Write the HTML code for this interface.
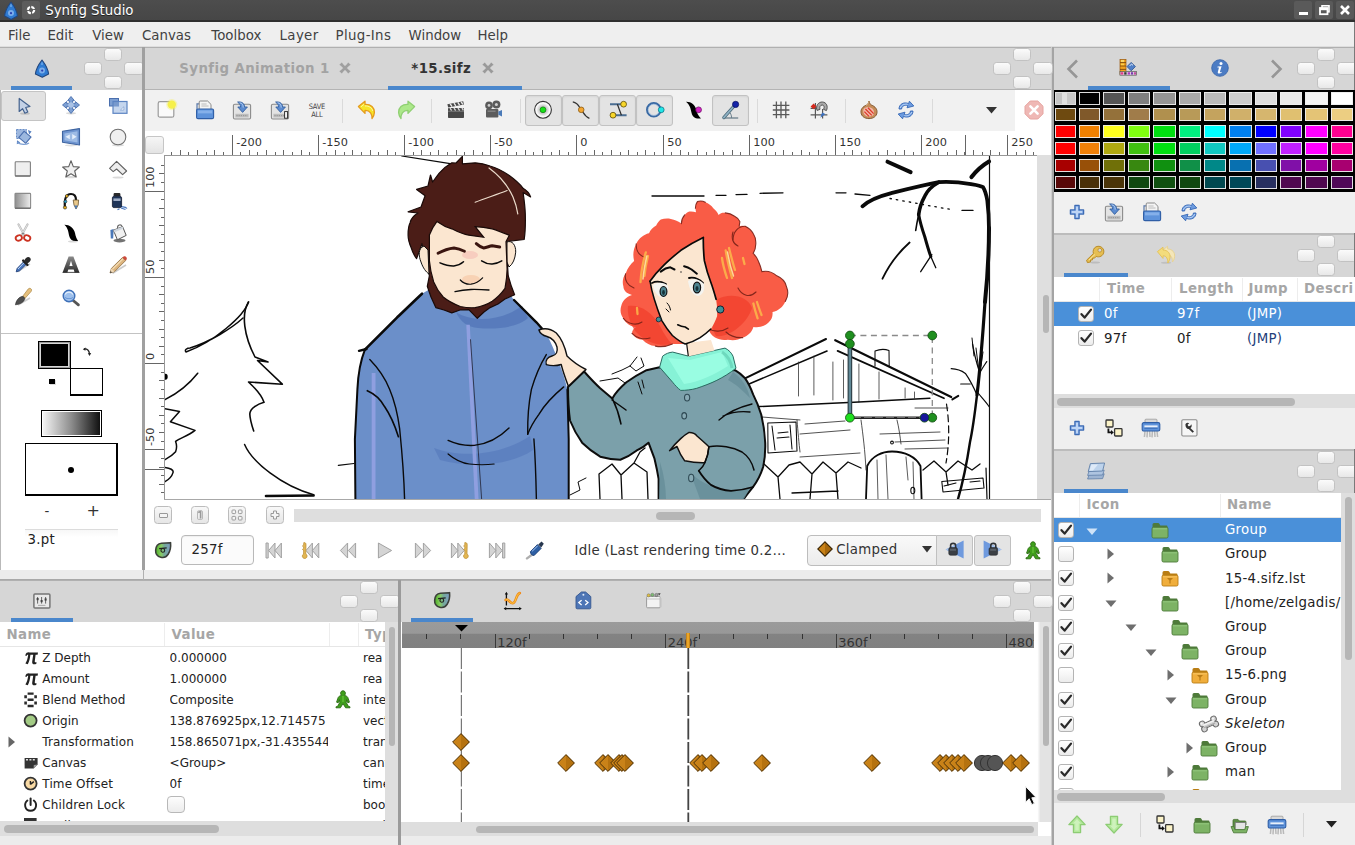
<!DOCTYPE html>
<html lang="en"><head><meta charset="utf-8"><title>Synfig Studio</title>
<style>
*{box-sizing:border-box;margin:0;padding:0}
html,body{width:1355px;height:845px;overflow:hidden;background:#d6d6d6}
body{font-family:"DejaVu Sans","Liberation Sans",sans-serif;font-size:14px;color:#2e3436}
#root{position:relative;width:1355px;height:845px;overflow:hidden;background:#d6d6d6}
.a{position:absolute}
.t{position:absolute;white-space:nowrap;line-height:1}
.hd{position:absolute;background:#d6d6d6}
.ul{position:absolute;height:3.6px;margin-top:-.6px;background:#4a87cc}
.dh{position:absolute;width:18px;height:12.4px;border-radius:3.5px;background:linear-gradient(#fbfbfb,#e8e8e8);border:1px solid #c2c2c2}
.sb{position:absolute;background:#dfdfdf}
.th{position:absolute;background:#b6b6b6;border-radius:4px}
.hb{font-weight:bold;color:#a6a6a6}
.cb{position:absolute;width:16px;height:16px;border:1px solid #b4b4b4;border-radius:3px;background:linear-gradient(#ffffff,#ececec)}
.row{position:absolute;left:0;right:0}
svg{position:absolute;overflow:visible}
</style></head>
<body><div id="root">
<div class="a" style="left:0px;top:0px;width:1355px;height:21px;background:linear-gradient(#4d4d4d,#464646)"></div><div class="a" style="left:0px;top:20px;width:1355px;height:2px;background:#2f2f2f"></div><div class="a" style="left:22px;top:1px;width:18px;height:18px;background:#5c5c5c;border-radius:2px"></div><svg style="left:26px;top:5px" width="10" height="10" viewBox="0 0 10 10"><circle cx="5" cy="5" r="3.2" fill="none" stroke="#fff" stroke-width="2.2" stroke-dasharray="3.6 1.4"/></svg><div class="t" style="left:45.2px;top:4.32px;font-size:13.33px;color:#fff;text-shadow:0 1px 0 #222">Synfig Studio</div><div class="a" style="left:1294px;top:1px;width:18px;height:18px;background:#5a5a5a;border-radius:2px"></div><div class="a" style="left:1315px;top:1px;width:18px;height:18px;background:#5a5a5a;border-radius:2px"></div><div class="a" style="left:1336px;top:1px;width:18px;height:18px;background:#5a5a5a;border-radius:2px"></div><div class="a" style="left:1299px;top:12px;width:9px;height:3px;background:#fff"></div><svg style="left:1319px;top:5px" width="11" height="10" viewBox="0 0 11 10"><rect x="3" y="0.8" width="7" height="6" fill="none" stroke="#fff" stroke-width="1.6"/><rect x="1" y="3" width="7.5" height="6.2" fill="#5a5a5a" stroke="#fff" stroke-width="1.8"/><rect x="1" y="3" width="7.5" height="2.2" fill="#fff"/></svg><svg style="left:1340px;top:5px" width="10" height="10" viewBox="0 0 10 10"><path d="M1 1 L9 9 M9 1 L1 9" stroke="#fff" stroke-width="2.6" stroke-linecap="butt"/></svg>
<div class="a" style="left:0px;top:22px;width:1355px;height:25px;background:#efefef"></div><div class="a" style="left:0px;top:46px;width:1355px;height:1px;background:#dedede"></div><div class="t" style="left:8.1px;top:28.62px;font-size:13.33px;letter-spacing:0;color:#414141">File</div><div class="t" style="left:47.4px;top:28.62px;font-size:13.33px;letter-spacing:0;color:#414141">Edit</div><div class="t" style="left:92.3px;top:28.62px;font-size:13.33px;letter-spacing:0;color:#414141">View</div><div class="t" style="left:142.0px;top:28.62px;font-size:13.33px;letter-spacing:0;color:#414141">Canvas</div><div class="t" style="left:211.3px;top:28.62px;font-size:13.33px;letter-spacing:0;color:#414141">Toolbox</div><div class="t" style="left:279.6px;top:28.62px;font-size:13.33px;letter-spacing:.35px;color:#414141">Layer</div><div class="t" style="left:335.6px;top:28.62px;font-size:13.33px;letter-spacing:.35px;color:#414141">Plug-Ins</div><div class="t" style="left:408.6px;top:28.62px;font-size:13.33px;letter-spacing:0;color:#414141">Window</div><div class="t" style="left:477.5px;top:28.62px;font-size:13.33px;letter-spacing:0;color:#414141">Help</div>
<div class="a" style="left:0px;top:47px;width:143px;height:43px;background:#d6d6d6;border-top:1.3px solid #b0b0b0"></div><div class="a" style="left:0px;top:90px;width:143px;height:480px;background:#fff;border-left:1px solid #b9b9b9"></div><div class="ul" style="left:11px;top:87px;width:61px"></div><div class="dh" style="left:104px;top:48.3px"></div><div class="dh" style="left:84.4px;top:61.8px;height:13.4px"></div><div class="dh" style="left:123.6px;top:61.8px;width:20px;height:13.4px"></div><div class="dh" style="left:104px;top:76.4px"></div><div class="a" style="left:1px;top:91px;width:45px;height:30px;background:#e2e2e2;border:1px solid #c4c4c4;border-radius:3px"></div><div class="a" style="left:1px;top:333px;width:142px;height:1px;background:#c3c3c3"></div><div class="a" style="left:70px;top:368px;width:33px;height:28px;background:#fff;border:1px solid #000;border-bottom-width:2px"></div><div class="a" style="left:38px;top:341px;width:33px;height:28px;background:#000;border:1px solid #000;box-shadow:inset 0 0 0 1px #9a9a9a,inset 0 0 0 2px #d8d8d8"></div><div class="a" style="left:49px;top:379px;width:6px;height:5px;background:#000;box-shadow:1px 1px 0 #ddd"></div><svg style="left:82px;top:347px" width="10" height="10" viewBox="0 0 10 10"><path d="M2 2 Q7 1.5 7.5 7" fill="none" stroke="#222" stroke-width="1.3"/><path d="M0.8 2.2 L3.6 0.6 L3.4 3.8Z M5.8 6.2 L9.2 6 L7.6 9Z" fill="#222"/></svg><div class="a" style="left:41px;top:410px;width:61px;height:27px;border:1px solid #000;background:#fff;padding:1px"><div style="width:100%;height:100%;background:linear-gradient(90deg,#f4f4f4,#8c8c8c 50%,#111)"></div></div><div class="a" style="left:25px;top:443px;width:93px;height:53px;background:#fff;border:1px solid #000;border-right-width:2px;border-bottom-width:2px"></div><div class="a" style="left:68px;top:466.5px;width:6.4px;height:6.4px;background:#000;border-radius:50%"></div><div class="t" style="left:44.5px;top:504.72px;font-size:13.33px;letter-spacing:0.27px;color:#333">-</div><div class="t" style="left:86.5px;top:502.96px;font-size:16px;color:#333">+</div><div class="a" style="left:25px;top:529px;width:93px;height:1px;background:#dcdcdc"></div><div class="a" style="left:25px;top:530px;width:93px;height:18px;background:linear-gradient(#f7f7f7,#fff 40%)"></div><div class="t" style="left:27.5px;top:533.32px;font-size:13.33px;letter-spacing:0.27px;color:#222">3.pt</div><div class="a" style="left:142.3px;top:47px;width:2.6px;height:522.5px;background:#a0a0a0"></div><div class="a" style="left:1051px;top:47px;width:3.4px;height:798px;background:#a4a4a4"></div><div class="a" style="left:1051px;top:47px;width:1px;height:798px;background:#cdcdcd"></div><div class="a" style="left:145px;top:47px;width:906px;height:43px;background:#d6d6d6;border-top:1.3px solid #b0b0b0"></div><div class="a" style="left:145px;top:89px;width:906px;height:1px;background:#b4b4b4"></div><div class="dh" style="left:1013px;top:48.3px"></div><div class="dh" style="left:993.4px;top:61.8px;height:13.4px"></div><div class="dh" style="left:1032.6px;top:61.8px;width:20px;height:13.4px"></div><div class="dh" style="left:1013px;top:76.4px"></div><div class="t" style="left:179.3px;top:62.22px;font-size:13.33px;letter-spacing:0.4px;font-weight:bold;color:#a3a3a3">Synfig Animation 1</div><div class="t" style="left:411.3px;top:62.22px;font-size:13.33px;letter-spacing:0.4px;font-weight:bold;color:#333">*15.sifz</div><svg style="left:339px;top:62px" width="12" height="12" viewBox="0 0 12 12"><path d="M2 2 L10 10 M10 2 L2 10" stroke="#a0a0a0" stroke-width="2.6"/><path d="M0.8 3.2 L3.2 0.8 M8.8 0.8 L11.2 3.2 M0.8 8.8 L3.2 11.2 M8.8 11.2 L11.2 8.8" stroke="#a0a0a0" stroke-width="1.2"/></svg><svg style="left:482px;top:62px" width="12" height="12" viewBox="0 0 12 12"><path d="M2 2 L10 10 M10 2 L2 10" stroke="#9a9a9a" stroke-width="2.6"/><path d="M0.8 3.2 L3.2 0.8 M8.8 0.8 L11.2 3.2 M0.8 8.8 L3.2 11.2 M8.8 11.2 L11.2 8.8" stroke="#9a9a9a" stroke-width="1.2"/></svg><div class="ul" style="left:388px;top:87px;width:134px"></div><div class="a" style="left:145px;top:90px;width:870px;height:41px;background:#f1f1f1"></div><div class="a" style="left:1015px;top:90px;width:36px;height:41px;background:#fff"></div><div class="a" style="left:342px;top:99px;width:1px;height:24px;background:#dadada"></div><div class="a" style="left:430.5px;top:99px;width:1px;height:24px;background:#dadada"></div><div class="a" style="left:519.5px;top:99px;width:1px;height:24px;background:#dadada"></div><div class="a" style="left:756.5px;top:99px;width:1px;height:24px;background:#dadada"></div><div class="a" style="left:844.5px;top:99px;width:1px;height:24px;background:#dadada"></div><div class="a" style="left:932px;top:99px;width:1px;height:24px;background:#dadada"></div><div class="a" style="left:525px;top:95px;width:37px;height:31px;background:#e3e3e3;border:1px solid #c2c2c2;border-radius:3px;box-shadow:inset 0 1px 2px rgba(0,0,0,.06)"></div><div class="a" style="left:562px;top:95px;width:37px;height:31px;background:#e3e3e3;border:1px solid #c2c2c2;border-radius:3px;box-shadow:inset 0 1px 2px rgba(0,0,0,.06)"></div><div class="a" style="left:599px;top:95px;width:37px;height:31px;background:#e3e3e3;border:1px solid #c2c2c2;border-radius:3px;box-shadow:inset 0 1px 2px rgba(0,0,0,.06)"></div><div class="a" style="left:636px;top:95px;width:37px;height:31px;background:#e3e3e3;border:1px solid #c2c2c2;border-radius:3px;box-shadow:inset 0 1px 2px rgba(0,0,0,.06)"></div><div class="a" style="left:712px;top:95px;width:37px;height:31px;background:#e3e3e3;border:1px solid #c2c2c2;border-radius:3px;box-shadow:inset 0 1px 2px rgba(0,0,0,.06)"></div><svg style="left:986px;top:107px" width="11" height="7" viewBox="0 0 11 7"><path d="M0 0 L11 0 L5.5 6.5Z" fill="#333"/></svg><div class="a" style="left:145px;top:499px;width:906px;height:71px;background:#fff"></div><div class="a" style="left:0px;top:570px;width:1051px;height:9px;background:#ececec"></div><div class="a" style="left:0px;top:579px;width:1051px;height:1.6px;background:#a9a9a9"></div><div class="a" style="left:143.2px;top:569.5px;width:1px;height:10px;background:#b0b0b0"></div><div class="a" style="left:0px;top:580px;width:398px;height:42px;background:#d6d6d6;border-top:1.3px solid #b0b0b0"></div><div class="ul" style="left:11px;top:619px;width:62px"></div><div class="dh" style="left:360px;top:581.3px"></div><div class="dh" style="left:340.4px;top:594.8px;height:13.4px"></div><div class="dh" style="left:379.6px;top:594.8px;width:20px;height:13.4px"></div><div class="dh" style="left:360px;top:609.4px"></div><div class="a" style="left:398px;top:580px;width:3px;height:265px;background:#9a9a9a"></div><div class="a" style="left:401px;top:580px;width:650px;height:42px;background:#d6d6d6;border-top:1.3px solid #b0b0b0"></div><div class="ul" style="left:411px;top:619px;width:62px"></div><div class="dh" style="left:1013px;top:581.3px"></div><div class="dh" style="left:993.4px;top:594.8px;height:13.4px"></div><div class="dh" style="left:1032.6px;top:594.8px;width:20px;height:13.4px"></div><div class="dh" style="left:1013px;top:609.4px"></div><div class="a" style="left:1054px;top:47px;width:301px;height:43px;background:#d6d6d6;border-top:1.3px solid #b0b0b0"></div><div class="ul" style="left:1088px;top:87px;width:82px"></div><div class="dh" style="left:1317px;top:48.3px"></div><div class="dh" style="left:1297.4px;top:61.8px;height:13.4px"></div><div class="dh" style="left:1336.6px;top:61.8px;width:20px;height:13.4px"></div><div class="dh" style="left:1317px;top:76.4px"></div><div class="a" style="left:1054px;top:233px;width:301px;height:44px;background:#d6d6d6;border-top:1.3px solid #b0b0b0"></div><div class="a" style="left:1054px;top:233px;width:301px;height:2px;background:#bcbcbc"></div><div class="ul" style="left:1064px;top:274px;width:64px"></div><div class="dh" style="left:1317px;top:235.3px"></div><div class="dh" style="left:1297.4px;top:248.8px;height:13.4px"></div><div class="dh" style="left:1336.6px;top:248.8px;width:20px;height:13.4px"></div><div class="dh" style="left:1317px;top:263.4px"></div><div class="a" style="left:1054px;top:449px;width:301px;height:44px;background:#d6d6d6;border-top:1.3px solid #b0b0b0"></div><div class="a" style="left:1054px;top:449px;width:301px;height:2px;background:#bcbcbc"></div><div class="ul" style="left:1064px;top:490px;width:64px"></div><div class="dh" style="left:1317px;top:451.3px"></div><div class="dh" style="left:1297.4px;top:464.8px;height:13.4px"></div><div class="dh" style="left:1336.6px;top:464.8px;width:20px;height:13.4px"></div><div class="dh" style="left:1317px;top:479.4px"></div><div class="a" style="left:1354px;top:22px;width:1px;height:823px;background:#7a7a7a"></div><svg style="left:1066px;top:59px" width="13" height="20" viewBox="0 0 13 20"><path d="M11 1.5 L2.5 10 L11 18.5" fill="none" stroke="#969696" stroke-width="2.6"/></svg><svg style="left:1270px;top:59px" width="13" height="20" viewBox="0 0 13 20"><path d="M2 1.5 L10.5 10 L2 18.5" fill="none" stroke="#969696" stroke-width="2.6"/></svg>
<div class="a" style="left:165px;top:156px;width:872px;height:343px;background:#fff;overflow:hidden"><svg style="left:-165px;top:-156px" width="1355" height="845" viewBox="0 0 1355 845"><g fill="none" stroke="#0a0a0a" stroke-linecap="round" stroke-linejoin="round" stroke-width="1.5"><path d="M248.5 302 C244 316 214 342 186 352 C184 350 187 348 190 348 C210 342 232 328 243 318"/><path d="M248.5 302 C241 314 244 336 255 357 L268 362 L257.5 360.5 L282.3 384.2 L248.5 382 C255 388 262 396 264 402.3 C258 404 250 408 249.8 414 C250 420 252 426 253.7 431" stroke-width="1.6"/><path d="M244.6 444.5 C252 462 282 486 313.6 494.7"/><path d="M266 496 L313.6 495.5" stroke-width="2.6"/><path d="M197.7 373.2 C190 383 178 393 165 399.7"/><path d="M165 408.8 L179.5 411.4 L170.4 421.8 L195 430.4 C188 436 180 438 175.6 441.4 C177 445 177 448 175.6 451.8 C172 456 168 458 165 459.6"/><path d="M165 467.4 C170 468 174 470 173 472.6 C172 476 168 480 165 481.7"/><path d="M338.3 465.3 L353.9 463.5" stroke-width="1.2"/><path d="M401.7 156 L451.8 163.8" stroke-width="1.2"/></g><ellipse cx="165.5" cy="376.8" rx="2.2" ry="3" fill="#000"/><g fill="none" stroke="#0a0a0a" stroke-linecap="round" stroke-linejoin="round" stroke-width="1.3"><path d="M652 196 L704 196"/><path d="M716 195.3 L726 195.3"/><path d="M736 194.6 L747 194.4"/><path d="M760 193.3 L783 192.8"/><path d="M836 192.8 L846 192.8 M855 194 L870 195.3"/><path d="M890 198.5 C910 202 935 207 952 209.5" stroke-dasharray="1.5 5"/><path d="M962 210.4 L973 210.4"/></g><g fill="none" stroke="#0a0a0a" stroke-linecap="round" stroke-linejoin="round"><path d="M887.5 161.7 L910.6 172.1" stroke-width="4"/><path d="M971.5 177 C977 170 983 165 989 161.5" stroke-width="4.2"/><path d="M862.4 206.3 C870 199 880 196 890.5 193.3 C906 189.5 922 185.5 938.8 182.2 C950 181.5 961 182.5 971 184.2 C976 185 980 185.5 983.1 187.2 C985.5 191 986.5 196 987.3 200.3 C988.5 210 989 220 989 230" stroke-width="3.8"/><path d="M938.8 182.2 C932 186 927 191 924.7 196.3 C921 203 919.5 208 918.7 214.4" stroke-width="3.6"/><path d="M918.7 214.4 C917.5 220 916.5 225 915.7 230.5" stroke-width="1.6"/><path d="M918.7 214.4 C920 222 922.5 230 924.7 236.5 C926.5 243 928.5 250 930.8 256.6" stroke-width="3"/><path d="M930.8 256.6 L935.8 267.7 M931.8 254.6 L920.7 271.7" stroke-width="1.3"/><path d="M909.6 242.5 C899 252 889 265 882.5 278.7" stroke-width="1.8"/><path d="M989 228 C989 250 987.5 278 985 302" stroke-width="4"/><path d="M985 302 C983 332 980.5 365 977 395" stroke-width="3.2"/><path d="M977 395 C975 412 973 428 970 442 C967 462 963 482 958 499" stroke-width="2.4"/><path d="M972.5 343.8 C974 352 976 361 978.5 368.7 M951.2 368.7 C957 369 962 371 965.4 373.4 C970 380 974 388 977 395 M960.7 384 L970.2 384 M986.7 361.6 C984.5 365 982.5 368 980.8 371 M978.5 393.5 C982 398 986 402 989 406.5" stroke-width="1.2"/><path d="M972 338 L974 356 M976 348 L979 372 M983 352 L981 366" stroke-width="1"/></g><g fill="none" stroke="#0a0a0a" stroke-linecap="round" stroke-linejoin="round" stroke="#1c1c1c" stroke-width="1.05"><path d="M745 378.3 L826 339" stroke-width="2"/><path d="M749 384 L827 351" stroke-width="1.6"/><path d="M835.2 340.2 L951.2 397" stroke-width="2.2"/><path d="M837.6 350.9 L944 398.2" stroke-width="1.8"/><path d="M952.4 399.4 L958.3 395.9" stroke-width="2"/><path d="M875 366 L875 351 C880 349 885 349 889 350.5 L889.2 366"/><path d="M798.5 362 V396 M813.9 356 V395 M832.9 362 V400 M843.5 360 V398 M858.9 364 V402 M879 372 V399 M905.1 388 V398 M914.5 392 V398" stroke-width=".8" stroke="#333"/><path d="M759.5 406.5 C800 405 880 401 929.9 398.2" stroke-width="1.5"/><path d="M762 417 L800 420 M805 424 L845 421 M800 434 L850 430 M880 434 L940 432 M895 442 L945 440 M905 449 L948 448 M800 457 L860 453 M915 408 L948 408" stroke-width=".85" stroke="#333"/><path d="M946.5 404 C949 420 950 440 946 463" stroke-dasharray="7 4" stroke-width="1.2"/><path d="M797 420 C798 432 799 444 800 452 M861 420 C863 435 865 450 866 470 M897 420 C899 428 900 436 901 444" stroke-width=".85" stroke="#333"/><path d="M767.8 423 L796 422 L797 451 L768 453 Z M772 426 L775 450 M790 425 L792 449 M778 433 L788 432 M777 438 L789 437"/><circle cx="892" cy="442.5" r="1.4"/><path d="M866 499 L867.2 466 C872 456 882 451.5 892 451.5 C905 451.5 916 457 920.5 466 L921.6 499" stroke-width="1.8"/><path d="M877 460 L878 499 M886 455 L888 499 M906 457 L908 480 M913 462 L914 499" stroke-width=".8" stroke="#333"/><ellipse cx="912.8" cy="490.5" rx="2" ry="3.2"/><path d="M764 464 L778 477 L789 465 L800 462 L812 474 L823 462 L836 473 L848 462 L861 468 M778 477 L780 499 M812 474 L810 499 M836 473 L838 499 M792 493 L838 491" stroke-width="1.3"/><path d="M923 470 L934 461 L946 472 L958 461 L972 470 L980 464 M946 472 L948 485" stroke-width="1.3"/><path d="M941.8 481.5 L983 478 L984 488 L943 492 Z M944 486 L956 483 M970 482 L980 481" stroke-width="1.1"/><path d="M986 468 L987 499" stroke-width="1.2"/><path d="M600 499 L599 474 L612 464 L621 475 L634 463 L647 472 L648 499 M621 475 L622 499 M634 463 L640 452 L645 448" stroke-width="1.3"/><path d="M612 374 L622 370 L630 366 L637 357 M630 366 L636 371 L644 366 L641 358 M600 381 L618 378 L625 383" stroke-width="1"/><path d="M570 495 L580 490 L578 482 L586 478" stroke-width="1"/></g><path d="M422 293.7 C412 303 404 311 397.2 317.3 L364.9 349.7 C360 362 358 376 357.4 389.4 L354.9 439.1 L355.4 500 L568.7 500 L568.7 439 L567.4 389.4 C565 379 562 370 558.7 362 C555 352 551 342 546.3 333.5 L536.4 322.3 L514 300 L505 288 L435 286 Z" fill="#6b8fc9"/><path d="M456 312 C470 322 500 322 522 306 L528 318 C520 326 500 330 478 328 C468 327 460 322 456 312Z" fill="#5578ba" opacity=".85"/><path d="M434 448 C460 458 500 456 530 436 L533 450 C510 466 470 468 440 460Z" fill="#5a7dbe" opacity=".8"/><path d="M466.3 324.8 L469.8 324.8 L478.6 500 L474.8 500Z" fill="#8f9fe0"/><path d="M371.7 373 L375.5 373 L375.5 500 L371.7 500Z" fill="#8f9fe0"/><g fill="none" stroke="#0a0a0a" stroke-linecap="round" stroke-linejoin="round" stroke-width="1.4"><path d="M422 293.7 C412 303 404 311 397.2 317.3 L364.9 349.7" stroke-width="2.6"/><path d="M364.9 349.7 C360 362 358 376 357.4 389.4 L354.9 439.1 L355.4 500" stroke-width="2"/><path d="M359 350.8 L366.5 349" stroke-width="2.4"/><path d="M514 300 L536.4 322.3 L546.3 333.5" stroke-width="2.4"/><path d="M567.4 389.4 L568.7 439 L568.7 500" stroke-width="2"/><path d="M470.5 339.7 L481.7 500" stroke-width=".8" stroke="#223"/><path d="M367.3 390.7 C375 394 381 400 384.7 406.8 C391 416 395 426 398.4 436.7" stroke-width="1.6"/><path d="M369.8 359.6 C378 368 385 378 389.7 389.4 C395 402 398 416 399.7 429.2 C402 452 404 476 404.6 500"/><path d="M546.3 354.6 C540 365 535 377 531.4 389.4 C528.5 404 527.5 420 527.7 434.2"/><path d="M563.7 386.9 C554 395 545 404 538.9 414.3 C534 421 530 428 527.7 434.2 M533.9 439 C535.5 460 536 480 536.4 500"/><path d="M448.1 440.4 C456 444 465 446 474.2 445.4 C487 444 499 438 509 428"/><path d="M448.1 454 C454 459 461 463 469.3 464 C478 465 486 465 494.1 464" stroke-width="1.2"/></g><path d="M462.4 156.4 L456 163 L451.8 162.8 C446 166 442 170 439 173.4 L432.6 182 L430.5 175 L428 186 L416.6 189.4 L425.1 195.8 L421 207 L408.1 211.8 L418 213 C413 216 411 219 410.2 222.4 C408 227 408 231 408.1 235.2 C408 240 409.5 244 411.3 248 C412.5 252 414.5 256 416.6 258.6 L422 243.7 L425.5 262 L429.4 275.7 L427.3 286.3 L431 297 L435.8 307.6 L444 310 L451.8 312.9 L460 310 L468.8 309.7 L477.3 318.3 L484 312 L490.1 307.6 L498 304 L505 299 L514.6 294.8 L511.4 286.3 L508.2 275.7 L506 241.6 L524.2 239.5 C525.5 231 525.5 222 525.3 213.9 C525 206 524 199 523.1 192.6 L530.6 196.9 C529 192 526 190 523.1 188.3 C519 183 514 179 509.3 175.6 C503 171 497 168 490.1 166 C485 164 480 163 475.2 162.8 L462.4 163.8 Z" fill="#4b1d17" stroke="#1a0a08" stroke-width="1.2" stroke-linejoin="round"/><path d="M424 246 C418 248 418.5 256 421 262 C423 268 426 272 429 274 L428 250Z" fill="#fbe6d0" stroke="#111" stroke-width="1"/><path d="M507 242 C512 240 516 245 515.7 252.2 C515 259 513 264 509 267 L507 262Z" fill="#fbe6d0" stroke="#111" stroke-width="1"/><path d="M429.4 235 C432 228 435 224 437 221.4 C442 225 447 227.5 451.8 228.8 C458 232 464 234.5 468.8 235.2 L483.7 237.3 L475.2 226.7 C481 227 487 227.8 492.2 228.8 C498 230.5 504 233 509.3 235.2 L506 241.6 L507.1 269.3 C507 276 506 283 505 288.4 C501 294 497 298 492.2 301.2 C487 304.5 481 306.5 475.2 307.6 C470 308 465 307.5 460.3 306.5 C454 304 448 301 443.2 297 C439 292.5 436 287.5 433.7 282 C431.5 275 430 268 429.4 260.8 Z" fill="#fbe6d0" stroke="#1a0a08" stroke-width="1.2"/><ellipse cx="471" cy="279.5" rx="9" ry="4.5" fill="#f6c9a8" opacity=".7"/><ellipse cx="470" cy="255" rx="8" ry="4" fill="#f4b8b0" opacity=".55"/><g fill="none" stroke="#0a0a0a" stroke-linecap="round" stroke-linejoin="round" stroke-width="1.5"><path d="M440 262.9 C445 265 449 266.2 453.9 266 C458 265.5 461 264 463.5 261.8"/><path d="M481.6 260.8 C485 263 488.5 264.2 492.2 264 C496 263.6 499 262.5 501.8 260.8"/><path d="M438 253.3 C444 250 449 248.5 454 248 C458 248.5 461.5 249.8 464.5 251.2" stroke="#3a1510" stroke-width="2.8"/><path d="M476.3 243.7 C479 246 481 247.5 483.7 248 C487 247.5 489.5 246.2 492.2 245.8 L499.7 247" stroke="#3a1510" stroke-width="3"/><path d="M460.3 280 C463 283 467 284.5 471 284.2 C476 283.5 479.5 281 482.6 277.8" stroke-width="1.2"/><path d="M455 291.6 C460 290.5 465 289.8 471 289.5 C477 289.4 483 289.6 489 290" stroke-width="1.3"/></g><path d="M475.2 202.2 C486 198 497 194.5 507.1 190.5 M489 168 C500 176 508 186 513 197 C515.5 203 517 208.5 517.8 213.9" fill="none" stroke="#ecdccc" stroke-width="1.2" stroke-linecap="round"/><path d="M538.9 330 C545 327.5 551 329 556.3 333 C562 339 565 347 567 356 C572 361 579 366 586 369.5 L569 388 C566 380 563 372 561.2 364.5 C556 366 551 366 546.3 364.6 C545 360 548 357 552 356 C556 355 558 352 557 347 C555.5 342 552 338 547 336.5 C543 335.5 540 333.5 538.9 330Z" fill="#fbe6d0" stroke="#111" stroke-width="1.4" stroke-linejoin="round"/><path d="M568 387 L584.1 371.5 C589 377 594.5 383 600.2 388.3 L612.3 398.4 C616 392 621 387 626.4 382.3 C633 377.5 640 373.5 646.5 370.2 L659.6 367.2 L735 370.2 C739 372.5 742 375 745.1 378.3 C748.5 383 751 388.5 753.1 394.4 C756.5 401 759 407.5 761.2 414.5 C763.5 424 764.8 433 765.2 442.7 C765.5 451 764.8 459 763.2 466.8 C761 474 757.5 481 753.1 486.9 C750 491 746.5 495 743.1 500 L658.6 500 L658.6 478.9 C657.5 472 656 465 654.5 458.7 L648.5 442.7 C645 446 641 448.5 636.4 450.7 C631.5 454.5 626 457.5 620.3 459.8 C613.5 459.5 606.5 458.5 600.2 456.7 C593.5 452.5 587.5 448 582.1 442.7 C577 435.5 573 428 570 420.5 C568.5 409 568 398 568 387Z" fill="#7ba0aa" stroke="#0d0d0d" stroke-width="2" stroke-linejoin="round"/><path d="M660 462 C664 474 666 488 666 500 L659 500Z M690 472 C705 488 730 494 750 488 L744 499 L700 499Z M733 372 C742 378 748 388 750 398 C744 392 736 384 728 380Z" fill="#668d99" opacity=".8"/><path d="M659.6 367.2 L662.6 356.2 C666 353.5 669 352.5 672.7 352.1 L688.7 356.2 L725 348.1 C729 350 731.5 353 733 356.2 L736 368.2 C730 373 723.5 377 716.9 380.3 C710.5 383.5 703.5 386 696.8 388.3 C691.5 389.8 686 390.4 680.7 390.4 C677.5 388 675 385.2 672.7 382.3 Z" fill="#86f2d6" stroke="#2a6a60" stroke-width="1"/><path d="M668 358 L690 360 L722 352 L728 366 C715 374 700 382 684 384 Z" fill="#9cffe4" opacity=".85"/><path d="M722 352 C728 356 731 362 732 368" fill="none" stroke="#5fc8ae" stroke-width="3" opacity=".6"/><path d="M686 343 L688 356.5 L714.5 350.5 L711 340 Z" fill="#fbe6d0"/><path d="M686.7 344 L688.3 356" fill="none" stroke="#111" stroke-width="1.2"/><path d="M669.6 450.7 C673 446 677 442 680.7 438.6 C683.5 436 686 434 688.7 432.6 C692 432.4 695 433.5 697 436 C701 439.5 705 443 708.9 446.7 C708.5 452 707 458 704.8 462.8 C698 463 691 462.2 684.7 460.8 L680.7 454.7 L677 446.5 Z" fill="#fbe6d0" stroke="#111" stroke-width="1.5" stroke-linejoin="round"/><g fill="none" stroke="#0a0a0a" stroke-linecap="round" stroke-linejoin="round" stroke-width="1.5"><path d="M698.8 470.8 C702 476 706 481 710.9 484.9 C717 488.5 724 490.5 731 490.9 C739 490.5 746.5 489 753 487" stroke-width="1.8"/><path d="M698.8 470.8 C702 468 704 465 704.8 462.8 C707 458 708.5 452 708.9 446.7 C720 445 733 447 742 452 C748 456 752 462 754 470"/><path d="M719 420 C728 412 740 407 752 404 M723 416 C732 412 742 411 750 412" stroke-width="1.3"/><path d="M612.3 398.4 C616 406 619 414 621 424 M612 400 L626 410" stroke-width="1.5"/><ellipse cx="687.1" cy="397.6" rx="2.6" ry="3.4" stroke-width="1.1" stroke="#2f4a54" fill="#88aab4"/><ellipse cx="684.2" cy="415.8" rx="2.4" ry="3.2" stroke-width="1.1" stroke="#2f4a54" fill="#88aab4"/><ellipse cx="691.2" cy="478" rx="2.6" ry="3.8" stroke-width="1.1" stroke="#2f4a54" fill="#88aab4"/><path d="M638 382 L642 394 M642 380 L644 388" stroke-width="1"/></g><path d="M697.4 201.6 C700 200.5 703 201 705.3 202.3 C708.5 203.5 711.5 205.5 713.3 208.3 C715.5 210 717.5 212.5 718.6 214.9 C720.5 213 723 212.5 725.3 212.9 C729 213 732 214.3 734.6 216.3 C737 217.5 739 219.5 739.9 221.6 L739.2 226.2 C741 225.5 743.2 225.5 745.2 226.2 C748.5 227.8 751.5 230.3 753.2 233.5 C755 236.3 755.9 239.5 755.8 242.8 C756 246.5 755 250.3 753.2 253.4 C755.5 255.6 757.4 258.3 758.5 261.4 C759.8 264 760.7 266.7 761.9 271.6 C767 270.5 772.5 272 776.8 275.8 C782 278 785.5 282 786.4 286.5 C788.5 291.5 788 297 785.3 301.4 C783 307 778.5 310.5 772.5 312.1 C773 316.5 771.5 320 768.3 322.7 C764 326.5 759 328 753.4 327 C752 332 748 336 742.7 337.6 C738.5 340 733.5 340.8 727.8 339.7 C723.5 340.5 719 339.8 715 337.6 C711.5 335.5 709.5 332.5 708.6 329.1 L700 337.6 L685.2 344 L672.4 344 C667 346.8 661 347.5 655.4 346.1 C650 345.5 646 343.2 642.6 339.7 C638 339.5 634.5 337 632 333.4 C632 331 633.5 328.5 636.2 327 C630.5 326.5 626 323.5 623.4 318.4 C620.5 314.5 619.8 310 621.3 305.7 C622.5 301 626 297 632 295 C626.5 293.5 623.5 290.5 623.4 286.5 C622 281.5 623 277 625.6 273.7 C627.5 268 630.5 264 634.1 260.9 C632.5 254.5 633.5 248.5 636.2 243.9 C639 238 643.5 234.5 649 233.2 C650.5 230 653 227.3 656.2 225.6 C657.3 223.2 658.8 221.2 660.8 219.6 C664 218.5 667.5 218.3 670.8 218.9 C674.8 219.5 678.5 221.2 681.4 223.6 C681.5 220 682.8 217 684.7 214.9 C686 213.2 687.6 212.1 689.4 211.6 C691.6 211.4 694 211.6 696 212.3 L695.4 208.3 C695.4 205.5 696.1 203.2 697.4 201.6Z" fill="#f95c46"/><path d="M716 300 C730 292 748 296 752 308 C748 322 730 338 716 336 C710 326 710 312 716 300Z M628 306 C640 304 652 312 660 326 C664 334 668 340 672 344 C660 347 645 342 636 332 C630 324 627 314 628 306Z" fill="#f03f2c" opacity=".75"/><g fill="none" stroke="#7a2218" stroke-width="1.1" stroke-linecap="round" opacity=".9"><path d="M695.4 208.3 C695.4 205.5 696.1 203.2 697.4 201.6 C700 200.5 703 201 705.3 202.3 M725.3 212.9 C729 213 732 214.3 734.6 216.3 C737 217.5 739 219.5 739.9 221.6 L739.2 226.2 M733 240 C733 232 738 226 745.2 226.2 C748.5 227.8 751.5 230.3 753.2 233.5 C755 236.3 755.9 239.5 755.8 242.8 C756 246.5 755 250.3 753.2 253.4 C755.5 255.6 757.4 258.3 758.5 261.4 C759.8 264 760.7 266.7 761.9 271.6 C767 270.5 772.5 272 776.8 275.8 C782 278 785.5 282 786.4 286.5 C788.5 291.5 788 297 785.3 301.4"/><path d="M733 232 C731 238 733 244 738 246 M738 288 C742 296 750 298 756 292 M708.6 329.1 C714 332 722 332 728 328 M742.7 337.6 C736 338 730 336 726 332"/><path d="M636.2 243.9 C636 250 639 255 644 257 M625.6 273.7 C624 280 628 286 634 288 M623.4 318.4 C628 324 636 326 642 322 M632 333.4 C636 338 644 340 650 338 M655.4 346.1 C662 347.5 668 346 672.4 344 M681.4 223.6 C681.5 220 682.8 217 684.7 214.9"/></g><path d="M645.8 252.4 C643 262 641 272 640.5 282.2 M648 256 C646 264 645 270 644.5 276 M725.7 250.3 C727 260 729.5 269 732 278 M729 248 C731 256 733 264 735 270 M722 258 C723 266 725 272 727 278 M753.4 303.5 C754.5 308.5 756 313.5 757.6 318.4 M757 302 C758.5 307 760 311 761.5 315 M743 258 L744.5 264 M637 308 L637.5 314" fill="none" stroke="#fbb84a" stroke-width="2.3" stroke-linecap="round" opacity=".85"/><path d="M727.5 252 C729 261 731 269 733.5 276 M646.8 256 C645 264 643.5 272 643 279" fill="none" stroke="#fde6a2" stroke-width="1.5" stroke-linecap="round" opacity=".9"/><path d="M703.3 237.5 C696 241 688 245.5 680.9 250.3 C675 255 669 260 663.9 265.2 C659 270 654 275.5 650 281.2 C651 287.5 652.5 293.5 654.3 299.3 C656.5 306.5 659 313.5 661.8 320.6 C665 326 668.5 331 672.4 335.5 C676.5 339 680.5 342 685.2 344 C690.5 342.5 695.5 340.5 700.1 337.6 C704 335 707.5 332.5 710.8 329.1 C713.5 325 715.5 320.5 717.1 316.3 C717.5 310.5 717 305 716.1 299.3 C714.5 293.5 713 288 710.8 282.2 C708 275 706 268 704.4 260.9 C703.5 253 703.2 245 703.3 237.5Z" fill="#fbe6d0"/><g fill="none" stroke="#0a0a0a" stroke-linecap="round" stroke-linejoin="round" stroke-width="1.5"><path d="M703.3 237.5 C696 241 688 245.5 680.9 250.3 C675 255 669 260 663.9 265.2 C659 270 654 275.5 650 281.2" stroke-width="1.7"/><path d="M703.3 237.5 C703.2 245 703.5 253 704.4 260.9 C706 268 708 275 710.8 282.2 C713 288 714.5 293.5 716.1 299.3" stroke-width="1.7"/><path d="M650 281.2 C651 287.5 652.5 293.5 654.3 299.3 C656.5 306.5 659 313.5 661.8 320.6 C665 326 668.5 331 672.4 335.5 C676.5 339 680.5 342 685.2 344 C690.5 342.5 695.5 340.5 700.1 337.6 C704 335 707.5 332.5 710.8 329.1"/><path d="M660.7 271.6 C664 269 667 267.6 670.3 267.3 L674.5 269.5" stroke-width="2"/><path d="M684.1 266.3 C687 267 689.5 268.2 691.6 269.5 L696.9 273.7" stroke-width="2"/><path d="M677.7 324.8 C680 326 682.5 326.8 685.2 327 L688.4 329.1" stroke-width="1.6"/><path d="M667 303 C669 305 670 307 670.5 310 M666 309 L669 312" stroke-width="1"/><path d="M652 283 C656 281 661 281.5 666 284 M689 278 C694 277 699 279 703 283" stroke-width="1.8"/></g><path d="M653 285 C657 282 664 282 668 286 C669 292 667 297 663 298 C658 297 654 292 653 285Z M688 281 C693 278 700 279 704 284 C705 290 703 295 698 296 C692 295 689 288 688 281Z" fill="#f4f4f0"/><ellipse cx="663.5" cy="291.5" rx="3.4" ry="5" fill="#4c8490" stroke="#111" stroke-width="1.2"/><ellipse cx="697" cy="287.5" rx="3.6" ry="5.4" fill="#4c8490" stroke="#111" stroke-width="1.2"/><ellipse cx="663.5" cy="292.5" rx="1.4" ry="2.4" fill="#16323a"/><ellipse cx="697" cy="288.5" rx="1.5" ry="2.6" fill="#16323a"/><circle cx="720.3" cy="309.5" r="3.6" fill="#3d8f96" stroke="#123" stroke-width="1"/><circle cx="658.6" cy="319.5" r="2.4" fill="#3d8f96" stroke="#123" stroke-width=".8"/><circle cx="681" cy="272" r=".8" fill="#333"/><path d="M849.9 335.5 H932.3 V417.7" fill="none" stroke="#8a8a8a" stroke-width="1.3" stroke-dasharray="6 4.5"/><path d="M849.9 343.8 V417.7" stroke="#27343a" stroke-width="4.6"/><path d="M849.9 345 V416.5" stroke="#5f8896" stroke-width="2.6"/><path d="M851 417.7 H924" stroke="#222" stroke-width="2.6"/><path d="M853 417.3 H920" stroke="#999" stroke-width=".8" stroke-dasharray="8 3"/><circle cx="849.9" cy="335.5" r="4.4" fill="#1f8f1f" stroke="#0c4a0c" stroke-width=".8"/><circle cx="849.9" cy="343.8" r="4.4" fill="#1f8f1f" stroke="#0c4a0c" stroke-width=".8"/><circle cx="932.3" cy="335.5" r="4.4" fill="#1f8f1f" stroke="#0c4a0c" stroke-width=".8"/><circle cx="932.3" cy="417.7" r="4.4" fill="#1f8f1f" stroke="#0c4a0c" stroke-width=".8"/><circle cx="924.5" cy="417.7" r="4.4" fill="#16169a" stroke="#0c4a0c" stroke-width=".8"/><circle cx="849.9" cy="417.7" r="4.4" fill="#1fe01f" stroke="#0c4a0c" stroke-width=".8"/><path d="M989.5 156 V499" stroke="#111" stroke-width="1.2"/></svg></div>
<div class="a" style="left:145px;top:131px;width:906px;height:24px;background:#fff"></div><div class="a" style="left:145px;top:155px;width:19px;height:344px;background:#fff"></div><div class="a" style="left:145px;top:135.5px;width:18.5px;height:18.5px;background:linear-gradient(#f6f6f6,#e4e4e4);border:1px solid #c6c6c6;border-radius:3px"></div><svg style="left:0;top:0" width="1355" height="845" viewBox="0 0 1355 845" shape-rendering="crispEdges"><path d="M164 155.5 H1037" stroke="#989898" stroke-width="1"/><path d="M164.5 155 V499" stroke="#989898" stroke-width="1"/><path d="M171.5 152 V155 M180.5 150 V155 M188.5 152 V155 M197.5 150 V155 M206.5 152 V155 M214.5 150 V155 M223.5 152 V155 M232.5 135 V155 M240.5 152 V155 M249.5 150 V155 M257.5 152 V155 M266.5 150 V155 M275.5 152 V155 M283.5 150 V155 M292.5 152 V155 M301.5 150 V155 M309.5 152 V155 M318.5 135 V155 M326.5 152 V155 M335.5 150 V155 M344.5 152 V155 M352.5 150 V155 M361.5 152 V155 M370.5 150 V155 M378.5 152 V155 M387.5 150 V155 M395.5 152 V155 M404.5 135 V155 M413.5 152 V155 M421.5 150 V155 M430.5 152 V155 M438.5 150 V155 M447.5 152 V155 M456.5 150 V155 M464.5 152 V155 M473.5 150 V155 M482.5 152 V155 M490.5 135 V155 M499.5 152 V155 M507.5 150 V155 M516.5 152 V155 M525.5 150 V155 M533.5 152 V155 M542.5 150 V155 M551.5 152 V155 M559.5 150 V155 M568.5 152 V155 M576.5 135 V155 M585.5 152 V155 M594.5 150 V155 M602.5 152 V155 M611.5 150 V155 M620.5 152 V155 M628.5 150 V155 M637.5 152 V155 M645.5 150 V155 M654.5 152 V155 M663.5 135 V155 M671.5 152 V155 M680.5 150 V155 M688.5 152 V155 M697.5 150 V155 M706.5 152 V155 M714.5 150 V155 M723.5 152 V155 M732.5 150 V155 M740.5 152 V155 M749.5 135 V155 M757.5 152 V155 M766.5 150 V155 M775.5 152 V155 M783.5 150 V155 M792.5 152 V155 M801.5 150 V155 M809.5 152 V155 M818.5 150 V155 M826.5 152 V155 M835.5 135 V155 M844.5 152 V155 M852.5 150 V155 M861.5 152 V155 M869.5 150 V155 M878.5 152 V155 M887.5 150 V155 M895.5 152 V155 M904.5 150 V155 M913.5 152 V155 M921.5 135 V155 M930.5 152 V155 M938.5 150 V155 M947.5 152 V155 M956.5 150 V155 M964.5 152 V155 M973.5 150 V155 M982.5 152 V155 M990.5 150 V155 M999.5 152 V155 M1007.5 135 V155 M1016.5 152 V155 M1025.5 150 V155 M1033.5 152 V155 M965.5 135 V155" stroke="#666" stroke-width="1"/><path d="M161 165.5 H164 M158.5 173.5 H164 M161 182.5 H164 M145 191.5 H164 M161 199.5 H164 M158.5 208.5 H164 M161 217.5 H164 M158.5 225.5 H164 M161 234.5 H164 M158.5 242.5 H164 M161 251.5 H164 M158.5 260.5 H164 M161 268.5 H164 M145 277.5 H164 M161 286.5 H164 M158.5 294.5 H164 M161 303.5 H164 M158.5 311.5 H164 M161 320.5 H164 M158.5 329.5 H164 M161 337.5 H164 M158.5 346.5 H164 M161 354.5 H164 M145 363.5 H164 M161 372.5 H164 M158.5 380.5 H164 M161 389.5 H164 M158.5 398.5 H164 M161 406.5 H164 M158.5 415.5 H164 M161 423.5 H164 M158.5 432.5 H164 M161 441.5 H164 M145 449.5 H164 M161 458.5 H164 M158.5 467.5 H164 M161 475.5 H164 M158.5 484.5 H164 M161 492.5 H164 M145 469.5 H164" stroke="#666" stroke-width="1"/></svg><div class="t" style="left:236.3px;top:136.64px;font-size:11.3px;color:#333">-200</div><div class="t" style="left:322.3px;top:136.64px;font-size:11.3px;color:#333">-150</div><div class="t" style="left:408.3px;top:136.64px;font-size:11.3px;color:#333">-100</div><div class="t" style="left:494.3px;top:136.64px;font-size:11.3px;color:#333">-50</div><div class="t" style="left:580.3px;top:136.64px;font-size:11.3px;color:#333">0</div><div class="t" style="left:667.3px;top:136.64px;font-size:11.3px;color:#333">50</div><div class="t" style="left:753.3px;top:136.64px;font-size:11.3px;color:#333">100</div><div class="t" style="left:839.3px;top:136.64px;font-size:11.3px;color:#333">150</div><div class="t" style="left:925.3px;top:136.64px;font-size:11.3px;color:#333">200</div><div class="t" style="left:1011.3px;top:136.64px;font-size:11.3px;color:#333">250</div><div class="t" style="left:146px;top:187.5px;font-size:11.3px;color:#333;transform-origin:0 0;transform:rotate(-90deg);"><span style="display:inline-block;transform:translateY(-1.3px)">100</span></div><div class="t" style="left:146px;top:273.5px;font-size:11.3px;color:#333;transform-origin:0 0;transform:rotate(-90deg);"><span style="display:inline-block;transform:translateY(-1.3px)">50</span></div><div class="t" style="left:146px;top:359.5px;font-size:11.3px;color:#333;transform-origin:0 0;transform:rotate(-90deg);"><span style="display:inline-block;transform:translateY(-1.3px)">0</span></div><div class="t" style="left:146px;top:445.5px;font-size:11.3px;color:#333;transform-origin:0 0;transform:rotate(-90deg);"><span style="display:inline-block;transform:translateY(-1.3px)">-50</span></div>
<div class="a" style="left:1037px;top:155px;width:14px;height:344px;background:#dfdfdf"></div><div class="th" style="left:1043px;top:295px;width:6px;height:38px;"></div><div class="a" style="left:164px;top:499px;width:887px;height:1px;background:#a8a8a8"></div><div class="a" style="left:154px;top:506px;width:18px;height:18px;background:linear-gradient(#f8f8f8,#e6e6e6);border:1px solid #bcbcbc;border-radius:3.5px"></div><div class="a" style="left:191px;top:506px;width:18px;height:18px;background:linear-gradient(#f8f8f8,#e6e6e6);border:1px solid #bcbcbc;border-radius:3.5px"></div><div class="a" style="left:228px;top:506px;width:18px;height:18px;background:linear-gradient(#f8f8f8,#e6e6e6);border:1px solid #bcbcbc;border-radius:3.5px"></div><div class="a" style="left:266px;top:506px;width:18px;height:18px;background:linear-gradient(#f8f8f8,#e6e6e6);border:1px solid #bcbcbc;border-radius:3.5px"></div><div class="a" style="left:158.5px;top:512.5px;width:9px;height:5px;background:#f4f4f4;border:1px solid #999;border-radius:1px"></div><svg style="left:195px;top:510px" width="10" height="10" viewBox="0 0 10 10"><path d="M3.2 2.5 L5.6 1.5 L5.6 8.5" fill="none" stroke="#999" stroke-width="1.6"/><rect x="2.5" y="0.8" width="5" height="8.6" rx="1" fill="none" stroke="#aaa" stroke-width=".8"/></svg><svg style="left:231px;top:509px" width="12" height="12" viewBox="0 0 12 12"><g fill="#f4f4f4" stroke="#999" stroke-width="1"><rect x="1" y="1" width="3.6" height="3.6" rx=".8"/><rect x="7.4" y="1" width="3.6" height="3.6" rx=".8"/><rect x="1" y="7.4" width="3.6" height="3.6" rx=".8"/><rect x="7.4" y="7.4" width="3.6" height="3.6" rx=".8"/></g></svg><svg style="left:270px;top:510px" width="10" height="10" viewBox="0 0 10 10"><path d="M3.5 1 H6.5 V3.5 H9 V6.5 H6.5 V9 H3.5 V6.5 H1 V3.5 H3.5Z" fill="#f4f4f4" stroke="#999" stroke-width="1"/></svg><div class="a" style="left:293.5px;top:508.5px;width:747.5px;height:13.5px;background:#dedede"></div><div class="th" style="left:655.5px;top:511.5px;width:39px;height:8px;"></div><div class="a" style="left:181px;top:535px;width:73px;height:30px;background:#fbfbfb;border:1px solid #b9b9b9;border-radius:4px;box-shadow:inset 0 1px 1px rgba(0,0,0,.05)"></div><div class="t" style="left:191.5px;top:543.02px;font-size:13.33px;letter-spacing:0.27px;color:#222">257f</div><div class="t" style="left:574.5px;top:543.72px;font-size:13.33px;letter-spacing:0.27px;color:#333">Idle (Last rendering time 0.2…</div><div class="a" style="left:807px;top:535px;width:130px;height:31px;background:linear-gradient(#f9f9f9,#ececec);border:1px solid #bdbdbd;border-radius:4px 0 0 4px"></div><div class="t" style="left:836.3px;top:543.02px;font-size:13.33px;letter-spacing:0.27px;color:#333">Clamped</div><svg style="left:922px;top:546px" width="10" height="7" viewBox="0 0 10 7"><path d="M0 0 L10 0 L5 6.5Z" fill="#333"/></svg><svg style="left:816.5px;top:541px" width="16" height="16" viewBox="0 0 16 16"><path d="M8 0.8 L15.2 8 L8 15.2 L0.8 8Z" fill="#c98218"/><path d="M8 0.8 L15.2 8 L8 15.2Z" fill="#a8680c"/><path d="M8 0.8 L15.2 8 L8 15.2 L0.8 8Z" fill="none" stroke="#3a2606" stroke-width="1.1"/></svg><div class="a" style="left:936px;top:535px;width:37px;height:31px;background:#e4e4e4;border:1px solid #c0c0c0;border-radius:0 3px 3px 0"></div><div class="a" style="left:974px;top:535px;width:37px;height:31px;background:#e4e4e4;border:1px solid #c0c0c0;border-radius:3px"></div>
<div class="a" style="left:1054px;top:90px;width:301px;height:102px;background:#000"></div><div class="a" style="left:1054.8px;top:91.5px;width:21.1px;height:13px;background:linear-gradient(90deg,#d0d0d0 0 30%,#eee 30% 60%,#d4d4d4 60%);opacity:.95;border:1.2px solid rgba(238,238,238,.92)"></div><div class="a" style="left:1078.8px;top:91.5px;width:21.1px;height:13px;background:#000000;border:1.2px solid rgba(238,238,238,.92)"></div><div class="a" style="left:1102.8px;top:91.5px;width:22.4px;height:13px;background:#555555;border:1.2px solid rgba(238,238,238,.92)"></div><div class="a" style="left:1128px;top:91.5px;width:22.4px;height:13px;background:#7f7f7f;border:1.2px solid rgba(238,238,238,.92)"></div><div class="a" style="left:1153.4px;top:91.5px;width:22.4px;height:13px;background:#959595;border:1.2px solid rgba(238,238,238,.92)"></div><div class="a" style="left:1178.7px;top:91.5px;width:22.4px;height:13px;background:#aaaaaa;border:1.2px solid rgba(238,238,238,.92)"></div><div class="a" style="left:1204px;top:91.5px;width:22.4px;height:13px;background:#bbbbbb;border:1.2px solid rgba(238,238,238,.92)"></div><div class="a" style="left:1229.3px;top:91.5px;width:22.4px;height:13px;background:#cccccc;border:1.2px solid rgba(238,238,238,.92)"></div><div class="a" style="left:1254.6px;top:91.5px;width:22.4px;height:13px;background:#dddddd;border:1.2px solid rgba(238,238,238,.92)"></div><div class="a" style="left:1279.9px;top:91.5px;width:22.4px;height:13px;background:#e9e9e9;border:1.2px solid rgba(238,238,238,.92)"></div><div class="a" style="left:1305.3px;top:91.5px;width:22.4px;height:13px;background:#f4f4f4;border:1.2px solid rgba(238,238,238,.92)"></div><div class="a" style="left:1330.7px;top:91.5px;width:22.4px;height:13px;background:#ffffff;border:1.2px solid rgba(238,238,238,.92)"></div><div class="a" style="left:1054.8px;top:108.45px;width:21.1px;height:13px;background:#6e4a10;border:1.2px solid rgba(238,238,238,.92)"></div><div class="a" style="left:1078.8px;top:108.45px;width:21.1px;height:13px;background:#80592a;border:1.2px solid rgba(238,238,238,.92)"></div><div class="a" style="left:1102.8px;top:108.45px;width:22.4px;height:13px;background:#94713a;border:1.2px solid rgba(238,238,238,.92)"></div><div class="a" style="left:1128px;top:108.45px;width:22.4px;height:13px;background:#a07c4a;border:1.2px solid rgba(238,238,238,.92)"></div><div class="a" style="left:1153.4px;top:108.45px;width:22.4px;height:13px;background:#b0904e;border:1.2px solid rgba(238,238,238,.92)"></div><div class="a" style="left:1178.7px;top:108.45px;width:22.4px;height:13px;background:#b89a58;border:1.2px solid rgba(238,238,238,.92)"></div><div class="a" style="left:1204px;top:108.45px;width:22.4px;height:13px;background:#c4a35e;border:1.2px solid rgba(238,238,238,.92)"></div><div class="a" style="left:1229.3px;top:108.45px;width:22.4px;height:13px;background:#d0b06a;border:1.2px solid rgba(238,238,238,.92)"></div><div class="a" style="left:1254.6px;top:108.45px;width:22.4px;height:13px;background:#d6b66e;border:1.2px solid rgba(238,238,238,.92)"></div><div class="a" style="left:1279.9px;top:108.45px;width:22.4px;height:13px;background:#e0c070;border:1.2px solid rgba(238,238,238,.92)"></div><div class="a" style="left:1305.3px;top:108.45px;width:22.4px;height:13px;background:#e4c476;border:1.2px solid rgba(238,238,238,.92)"></div><div class="a" style="left:1330.7px;top:108.45px;width:22.4px;height:13px;background:#ecce82;border:1.2px solid rgba(238,238,238,.92)"></div><div class="a" style="left:1054.8px;top:125.4px;width:21.1px;height:13px;background:#ff0000;border:1.2px solid rgba(238,238,238,.92)"></div><div class="a" style="left:1078.8px;top:125.4px;width:21.1px;height:13px;background:#f08000;border:1.2px solid rgba(238,238,238,.92)"></div><div class="a" style="left:1102.8px;top:125.4px;width:22.4px;height:13px;background:#ffff20;border:1.2px solid rgba(238,238,238,.92)"></div><div class="a" style="left:1128px;top:125.4px;width:22.4px;height:13px;background:#80ff10;border:1.2px solid rgba(238,238,238,.92)"></div><div class="a" style="left:1153.4px;top:125.4px;width:22.4px;height:13px;background:#00e010;border:1.2px solid rgba(238,238,238,.92)"></div><div class="a" style="left:1178.7px;top:125.4px;width:22.4px;height:13px;background:#00f080;border:1.2px solid rgba(238,238,238,.92)"></div><div class="a" style="left:1204px;top:125.4px;width:22.4px;height:13px;background:#00ffff;border:1.2px solid rgba(238,238,238,.92)"></div><div class="a" style="left:1229.3px;top:125.4px;width:22.4px;height:13px;background:#0080f0;border:1.2px solid rgba(238,238,238,.92)"></div><div class="a" style="left:1254.6px;top:125.4px;width:22.4px;height:13px;background:#0000ff;border:1.2px solid rgba(238,238,238,.92)"></div><div class="a" style="left:1279.9px;top:125.4px;width:22.4px;height:13px;background:#8000ff;border:1.2px solid rgba(238,238,238,.92)"></div><div class="a" style="left:1305.3px;top:125.4px;width:22.4px;height:13px;background:#ff00ff;border:1.2px solid rgba(238,238,238,.92)"></div><div class="a" style="left:1330.7px;top:125.4px;width:22.4px;height:13px;background:#ff0090;border:1.2px solid rgba(238,238,238,.92)"></div><div class="a" style="left:1054.8px;top:142.35px;width:21.1px;height:13px;background:#ff0000;border:1.2px solid rgba(238,238,238,.92)"></div><div class="a" style="left:1078.8px;top:142.35px;width:21.1px;height:13px;background:#f08008;border:1.2px solid rgba(238,238,238,.92)"></div><div class="a" style="left:1102.8px;top:142.35px;width:22.4px;height:13px;background:#b0a810;border:1.2px solid rgba(238,238,238,.92)"></div><div class="a" style="left:1128px;top:142.35px;width:22.4px;height:13px;background:#40c010;border:1.2px solid rgba(238,238,238,.92)"></div><div class="a" style="left:1153.4px;top:142.35px;width:22.4px;height:13px;background:#00e010;border:1.2px solid rgba(238,238,238,.92)"></div><div class="a" style="left:1178.7px;top:142.35px;width:22.4px;height:13px;background:#00d060;border:1.2px solid rgba(238,238,238,.92)"></div><div class="a" style="left:1204px;top:142.35px;width:22.4px;height:13px;background:#10c8c0;border:1.2px solid rgba(238,238,238,.92)"></div><div class="a" style="left:1229.3px;top:142.35px;width:22.4px;height:13px;background:#00a8f8;border:1.2px solid rgba(238,238,238,.92)"></div><div class="a" style="left:1254.6px;top:142.35px;width:22.4px;height:13px;background:#7070ff;border:1.2px solid rgba(238,238,238,.92)"></div><div class="a" style="left:1279.9px;top:142.35px;width:22.4px;height:13px;background:#c020ff;border:1.2px solid rgba(238,238,238,.92)"></div><div class="a" style="left:1305.3px;top:142.35px;width:22.4px;height:13px;background:#ff00ff;border:1.2px solid rgba(238,238,238,.92)"></div><div class="a" style="left:1330.7px;top:142.35px;width:22.4px;height:13px;background:#ff00a0;border:1.2px solid rgba(238,238,238,.92)"></div><div class="a" style="left:1054.8px;top:159.3px;width:21.1px;height:13px;background:#a80000;border:1.2px solid rgba(238,238,238,.92)"></div><div class="a" style="left:1078.8px;top:159.3px;width:21.1px;height:13px;background:#985008;border:1.2px solid rgba(238,238,238,.92)"></div><div class="a" style="left:1102.8px;top:159.3px;width:22.4px;height:13px;background:#707008;border:1.2px solid rgba(238,238,238,.92)"></div><div class="a" style="left:1128px;top:159.3px;width:22.4px;height:13px;background:#388810;border:1.2px solid rgba(238,238,238,.92)"></div><div class="a" style="left:1153.4px;top:159.3px;width:22.4px;height:13px;background:#109010;border:1.2px solid rgba(238,238,238,.92)"></div><div class="a" style="left:1178.7px;top:159.3px;width:22.4px;height:13px;background:#109048;border:1.2px solid rgba(238,238,238,.92)"></div><div class="a" style="left:1204px;top:159.3px;width:22.4px;height:13px;background:#008888;border:1.2px solid rgba(238,238,238,.92)"></div><div class="a" style="left:1229.3px;top:159.3px;width:22.4px;height:13px;background:#0870b0;border:1.2px solid rgba(238,238,238,.92)"></div><div class="a" style="left:1254.6px;top:159.3px;width:22.4px;height:13px;background:#4850b0;border:1.2px solid rgba(238,238,238,.92)"></div><div class="a" style="left:1279.9px;top:159.3px;width:22.4px;height:13px;background:#8010a8;border:1.2px solid rgba(238,238,238,.92)"></div><div class="a" style="left:1305.3px;top:159.3px;width:22.4px;height:13px;background:#a000a0;border:1.2px solid rgba(238,238,238,.92)"></div><div class="a" style="left:1330.7px;top:159.3px;width:22.4px;height:13px;background:#a80070;border:1.2px solid rgba(238,238,238,.92)"></div><div class="a" style="left:1054.8px;top:176.25px;width:21.1px;height:13px;background:#580808;border:1.2px solid rgba(238,238,238,.92)"></div><div class="a" style="left:1078.8px;top:176.25px;width:21.1px;height:13px;background:#4a3008;border:1.2px solid rgba(238,238,238,.92)"></div><div class="a" style="left:1102.8px;top:176.25px;width:22.4px;height:13px;background:#4a3408;border:1.2px solid rgba(238,238,238,.92)"></div><div class="a" style="left:1128px;top:176.25px;width:22.4px;height:13px;background:#104810;border:1.2px solid rgba(238,238,238,.92)"></div><div class="a" style="left:1153.4px;top:176.25px;width:22.4px;height:13px;background:#105010;border:1.2px solid rgba(238,238,238,.92)"></div><div class="a" style="left:1178.7px;top:176.25px;width:22.4px;height:13px;background:#104810;border:1.2px solid rgba(238,238,238,.92)"></div><div class="a" style="left:1204px;top:176.25px;width:22.4px;height:13px;background:#004850;border:1.2px solid rgba(238,238,238,.92)"></div><div class="a" style="left:1229.3px;top:176.25px;width:22.4px;height:13px;background:#004858;border:1.2px solid rgba(238,238,238,.92)"></div><div class="a" style="left:1254.6px;top:176.25px;width:22.4px;height:13px;background:#283060;border:1.2px solid rgba(238,238,238,.92)"></div><div class="a" style="left:1279.9px;top:176.25px;width:22.4px;height:13px;background:#500850;border:1.2px solid rgba(238,238,238,.92)"></div><div class="a" style="left:1305.3px;top:176.25px;width:22.4px;height:13px;background:#500850;border:1.2px solid rgba(238,238,238,.92)"></div><div class="a" style="left:1330.7px;top:176.25px;width:22.4px;height:13px;background:#500858;border:1.2px solid rgba(238,238,238,.92)"></div><div class="a" style="left:1054px;top:192px;width:301px;height:41px;background:#f0f0f0"></div>
<div class="a" style="left:1054px;top:277px;width:301px;height:117px;background:#fff"></div><div class="a" style="left:1099px;top:278px;width:1px;height:23px;background:#ededed"></div><div class="a" style="left:1171px;top:278px;width:1px;height:23px;background:#ededed"></div><div class="a" style="left:1242px;top:278px;width:1px;height:23px;background:#ededed"></div><div class="a" style="left:1297px;top:278px;width:1px;height:23px;background:#ededed"></div><div class="a" style="left:1054px;top:301px;width:301px;height:1px;background:#e6e6e6"></div><div class="t hb" style="left:1107px;top:282.32px;font-size:13.33px;letter-spacing:0.4px;">Time</div><div class="t hb" style="left:1179px;top:282.32px;font-size:13.33px;letter-spacing:0.4px;">Length</div><div class="t hb" style="left:1248.5px;top:282.32px;font-size:13.33px;letter-spacing:0.4px;">Jump</div><div class="t hb" style="left:1304px;top:282.32px;font-size:13.33px;letter-spacing:0.4px;">Descri</div><div class="a" style="left:1054px;top:302px;width:301px;height:24px;background:#4a90d9"></div><div class="cb" style="left:1078px;top:306px"><svg style="left:0;top:0" width="14" height="14" viewBox="0 0 14 14"><path d="M2.5 7.2 L5.6 10.6 L12 2.6" fill="none" stroke="#2a2a2a" stroke-width="2.3" stroke-linecap="round" stroke-linejoin="round"/></svg></div><div class="cb" style="left:1078px;top:330px"><svg style="left:0;top:0" width="14" height="14" viewBox="0 0 14 14"><path d="M2.5 7.2 L5.6 10.6 L12 2.6" fill="none" stroke="#2a2a2a" stroke-width="2.3" stroke-linecap="round" stroke-linejoin="round"/></svg></div><div class="t" style="left:1104px;top:307.32px;font-size:13.33px;letter-spacing:0.27px;color:#fff">0f</div><div class="t" style="left:1177px;top:307.32px;font-size:13.33px;letter-spacing:0.27px;color:#fff">97f</div><div class="t" style="left:1247px;top:307.32px;font-size:13.33px;letter-spacing:0.27px;color:#fff">(JMP)</div><div class="t" style="left:1104px;top:331.52px;font-size:13.33px;letter-spacing:0.27px;color:#222">97f</div><div class="t" style="left:1177px;top:331.52px;font-size:13.33px;letter-spacing:0.27px;color:#222">0f</div><div class="t" style="left:1247px;top:331.52px;font-size:13.33px;letter-spacing:0.27px;color:#23407a">(JMP)</div><div class="a" style="left:1054px;top:394px;width:301px;height:14px;background:#dedede"></div><div class="th" style="left:1057px;top:397.5px;width:238px;height:8.5px;"></div><div class="a" style="left:1054px;top:408px;width:301px;height:41px;background:#efefef"></div>
<div class="a" style="left:1054px;top:493px;width:287px;height:297px;background:#fff"></div><div class="a" style="left:1079px;top:494px;width:1px;height:23px;background:#ededed"></div><div class="a" style="left:1220px;top:494px;width:1px;height:23px;background:#ededed"></div><div class="a" style="left:1054px;top:517px;width:287px;height:1px;background:#e6e6e6"></div><div class="t hb" style="left:1086.5px;top:498.02px;font-size:13.33px;letter-spacing:0.4px;">Icon</div><div class="t hb" style="left:1227px;top:498.02px;font-size:13.33px;letter-spacing:0.4px;">Name</div><div class="a" style="left:1054px;top:493px;width:287px;height:297px;overflow:hidden"><div class="a" style="left:0px;top:25.0px;width:287px;height:24.4px;background:#4a90d9"></div><div class="cb" style="left:4px;top:29px"><svg style="left:0;top:0" width="14" height="14" viewBox="0 0 14 14"><path d="M2.5 7.2 L5.6 10.6 L12 2.6" fill="none" stroke="#2a2a2a" stroke-width="2.3" stroke-linecap="round" stroke-linejoin="round"/></svg></div><svg style="left:31.59999999999991px;top:34.5px" width="12" height="8" viewBox="0 0 12 8"><path d="M0.5 0.5 L11.5 0.5 L6 7Z" fill="#cfe3f8"/></svg><svg style="left:97.29999999999995px;top:29.0px" width="18" height="17" viewBox="0 0 18 17"><path d="M1.5 15 L1.5 2.5 Q1.5 1 3 1 L7 1 Q8 1 8.5 2 L9.3 3.5 L15.5 3.5 Q16.5 3.5 16.5 4.8 L16.5 15Z" fill="#4e7a3a"/><rect x="1" y="5.2" width="16" height="10.8" rx="1.5" fill="#7db365" stroke="#4e7a3a" stroke-width="0.9"/><rect x="2" y="6.2" width="14" height="1.2" fill="#96c980" opacity=".8"/></svg><div class="t" style="left:171px;top:30.12px;font-size:13.33px;letter-spacing:0.27px;color:#fff">Group</div><div class="cb" style="left:4px;top:53px"></div><svg style="left:53.200000000000045px;top:55.22000000000003px" width="8" height="12" viewBox="0 0 8 12"><path d="M0.5 0.5 L7 6 L0.5 11.5Z" fill="#6e6e6e"/></svg><svg style="left:107.40000000000009px;top:53.22000000000003px" width="18" height="17" viewBox="0 0 18 17"><path d="M1.5 15 L1.5 2.5 Q1.5 1 3 1 L7 1 Q8 1 8.5 2 L9.3 3.5 L15.5 3.5 Q16.5 3.5 16.5 4.8 L16.5 15Z" fill="#4e7a3a"/><rect x="1" y="5.2" width="16" height="10.8" rx="1.5" fill="#7db365" stroke="#4e7a3a" stroke-width="0.9"/><rect x="2" y="6.2" width="14" height="1.2" fill="#96c980" opacity=".8"/></svg><div class="t" style="left:171px;top:54.34px;font-size:13.33px;letter-spacing:0.27px;color:#222">Group</div><div class="cb" style="left:4px;top:77px"><svg style="left:0;top:0" width="14" height="14" viewBox="0 0 14 14"><path d="M2.5 7.2 L5.6 10.6 L12 2.6" fill="none" stroke="#2a2a2a" stroke-width="2.3" stroke-linecap="round" stroke-linejoin="round"/></svg></div><svg style="left:53.200000000000045px;top:79.44000000000005px" width="8" height="12" viewBox="0 0 8 12"><path d="M0.5 0.5 L7 6 L0.5 11.5Z" fill="#6e6e6e"/></svg><svg style="left:107.40000000000009px;top:77.44000000000005px" width="18" height="17" viewBox="0 0 18 17"><path d="M1.5 15 L1.5 2.5 Q1.5 1 3 1 L7 1 Q8 1 8.5 2 L9.3 3.5 L15.5 3.5 Q16.5 3.5 16.5 4.8 L16.5 15Z" fill="#b97d14"/><rect x="1" y="5.2" width="16" height="10.8" rx="1.5" fill="#f0ae3c" stroke="#b97d14" stroke-width="0.9"/><rect x="2" y="6.2" width="14" height="1.2" fill="#f8c766" opacity=".8"/><path d="M6 8 L12 8 L9.6 10.6 L9.6 13.5 L8.4 13.5 L8.4 10.6Z" fill="#b07410" opacity=".85"/></svg><div class="t" style="left:171px;top:78.56px;font-size:13.33px;letter-spacing:0.27px;color:#222">15-4.sifz.lst</div><div class="cb" style="left:4px;top:102px"><svg style="left:0;top:0" width="14" height="14" viewBox="0 0 14 14"><path d="M2.5 7.2 L5.6 10.6 L12 2.6" fill="none" stroke="#2a2a2a" stroke-width="2.3" stroke-linecap="round" stroke-linejoin="round"/></svg></div><svg style="left:51.200000000000045px;top:107.15999999999997px" width="12" height="8" viewBox="0 0 12 8"><path d="M0.5 0.5 L11.5 0.5 L6 7Z" fill="#6e6e6e"/></svg><svg style="left:107.40000000000009px;top:101.65999999999997px" width="18" height="17" viewBox="0 0 18 17"><path d="M1.5 15 L1.5 2.5 Q1.5 1 3 1 L7 1 Q8 1 8.5 2 L9.3 3.5 L15.5 3.5 Q16.5 3.5 16.5 4.8 L16.5 15Z" fill="#4e7a3a"/><rect x="1" y="5.2" width="16" height="10.8" rx="1.5" fill="#7db365" stroke="#4e7a3a" stroke-width="0.9"/><rect x="2" y="6.2" width="14" height="1.2" fill="#96c980" opacity=".8"/></svg><div class="t" style="left:171px;top:102.78px;font-size:13.33px;letter-spacing:0.27px;color:#222">[/home/zelgadis/</div><div class="cb" style="left:4px;top:126px"><svg style="left:0;top:0" width="14" height="14" viewBox="0 0 14 14"><path d="M2.5 7.2 L5.6 10.6 L12 2.6" fill="none" stroke="#2a2a2a" stroke-width="2.3" stroke-linecap="round" stroke-linejoin="round"/></svg></div><svg style="left:71px;top:131.38px" width="12" height="8" viewBox="0 0 12 8"><path d="M0.5 0.5 L11.5 0.5 L6 7Z" fill="#6e6e6e"/></svg><svg style="left:117px;top:125.88px" width="18" height="17" viewBox="0 0 18 17"><path d="M1.5 15 L1.5 2.5 Q1.5 1 3 1 L7 1 Q8 1 8.5 2 L9.3 3.5 L15.5 3.5 Q16.5 3.5 16.5 4.8 L16.5 15Z" fill="#4e7a3a"/><rect x="1" y="5.2" width="16" height="10.8" rx="1.5" fill="#7db365" stroke="#4e7a3a" stroke-width="0.9"/><rect x="2" y="6.2" width="14" height="1.2" fill="#96c980" opacity=".8"/></svg><div class="t" style="left:171px;top:127.00px;font-size:13.33px;letter-spacing:0.27px;color:#222">Group</div><div class="cb" style="left:4px;top:150px"><svg style="left:0;top:0" width="14" height="14" viewBox="0 0 14 14"><path d="M2.5 7.2 L5.6 10.6 L12 2.6" fill="none" stroke="#2a2a2a" stroke-width="2.3" stroke-linecap="round" stroke-linejoin="round"/></svg></div><svg style="left:90.59999999999991px;top:155.60000000000002px" width="12" height="8" viewBox="0 0 12 8"><path d="M0.5 0.5 L11.5 0.5 L6 7Z" fill="#6e6e6e"/></svg><svg style="left:127px;top:150.10000000000002px" width="18" height="17" viewBox="0 0 18 17"><path d="M1.5 15 L1.5 2.5 Q1.5 1 3 1 L7 1 Q8 1 8.5 2 L9.3 3.5 L15.5 3.5 Q16.5 3.5 16.5 4.8 L16.5 15Z" fill="#4e7a3a"/><rect x="1" y="5.2" width="16" height="10.8" rx="1.5" fill="#7db365" stroke="#4e7a3a" stroke-width="0.9"/><rect x="2" y="6.2" width="14" height="1.2" fill="#96c980" opacity=".8"/></svg><div class="t" style="left:171px;top:151.22px;font-size:13.33px;letter-spacing:0.27px;color:#222">Group</div><div class="cb" style="left:4px;top:174px"></div><svg style="left:112.90000000000009px;top:176.31999999999994px" width="8" height="12" viewBox="0 0 8 12"><path d="M0.5 0.5 L7 6 L0.5 11.5Z" fill="#6e6e6e"/></svg><svg style="left:136.70000000000005px;top:174.31999999999994px" width="18" height="17" viewBox="0 0 18 17"><path d="M1.5 15 L1.5 2.5 Q1.5 1 3 1 L7 1 Q8 1 8.5 2 L9.3 3.5 L15.5 3.5 Q16.5 3.5 16.5 4.8 L16.5 15Z" fill="#b97d14"/><rect x="1" y="5.2" width="16" height="10.8" rx="1.5" fill="#f0ae3c" stroke="#b97d14" stroke-width="0.9"/><rect x="2" y="6.2" width="14" height="1.2" fill="#f8c766" opacity=".8"/><path d="M6 8 L12 8 L9.6 10.6 L9.6 13.5 L8.4 13.5 L8.4 10.6Z" fill="#b07410" opacity=".85"/></svg><div class="t" style="left:171px;top:175.44px;font-size:13.33px;letter-spacing:0.27px;color:#222">15-6.png</div><div class="cb" style="left:4px;top:199px"><svg style="left:0;top:0" width="14" height="14" viewBox="0 0 14 14"><path d="M2.5 7.2 L5.6 10.6 L12 2.6" fill="none" stroke="#2a2a2a" stroke-width="2.3" stroke-linecap="round" stroke-linejoin="round"/></svg></div><svg style="left:110.90000000000009px;top:204.03999999999996px" width="12" height="8" viewBox="0 0 12 8"><path d="M0.5 0.5 L11.5 0.5 L6 7Z" fill="#6e6e6e"/></svg><svg style="left:136.70000000000005px;top:198.53999999999996px" width="18" height="17" viewBox="0 0 18 17"><path d="M1.5 15 L1.5 2.5 Q1.5 1 3 1 L7 1 Q8 1 8.5 2 L9.3 3.5 L15.5 3.5 Q16.5 3.5 16.5 4.8 L16.5 15Z" fill="#4e7a3a"/><rect x="1" y="5.2" width="16" height="10.8" rx="1.5" fill="#7db365" stroke="#4e7a3a" stroke-width="0.9"/><rect x="2" y="6.2" width="14" height="1.2" fill="#96c980" opacity=".8"/></svg><div class="t" style="left:171px;top:199.66px;font-size:13.33px;letter-spacing:0.27px;color:#222">Group</div><div class="cb" style="left:4px;top:223px"><svg style="left:0;top:0" width="14" height="14" viewBox="0 0 14 14"><path d="M2.5 7.2 L5.6 10.6 L12 2.6" fill="none" stroke="#2a2a2a" stroke-width="2.3" stroke-linecap="round" stroke-linejoin="round"/></svg></div><svg style="left:145.4000000000001px;top:221.76px" width="20" height="18" viewBox="0 0 20 18"><g transform="rotate(-24 10 9)"><g fill="#6a6a6a"><rect x="4" y="6" width="12" height="6"/><circle cx="3.8" cy="6.2" r="3.3"/><circle cx="3.8" cy="11.8" r="3.3"/><circle cx="16.2" cy="6.2" r="3.3"/><circle cx="16.2" cy="11.8" r="3.3"/></g><g fill="#d4d4d4"><rect x="4" y="7" width="12" height="4"/><circle cx="3.8" cy="6.2" r="2.3"/><circle cx="3.8" cy="11.8" r="2.3"/><circle cx="16.2" cy="6.2" r="2.3"/><circle cx="16.2" cy="11.8" r="2.3"/></g><rect x="4" y="7.2" width="12" height="1.4" fill="#f4f4f4"/><circle cx="3.4" cy="5.6" r="1.1" fill="#f6f6f6"/><circle cx="15.8" cy="5.6" r="1.1" fill="#f6f6f6"/><rect x="4" y="10" width="12" height="1" fill="#a8a8a8"/></g></svg><div class="t" style="left:171px;top:223.88px;font-size:13.33px;letter-spacing:0.27px;color:#222;font-style:italic">Skeleton</div><div class="cb" style="left:4px;top:247px"><svg style="left:0;top:0" width="14" height="14" viewBox="0 0 14 14"><path d="M2.5 7.2 L5.6 10.6 L12 2.6" fill="none" stroke="#2a2a2a" stroke-width="2.3" stroke-linecap="round" stroke-linejoin="round"/></svg></div><svg style="left:132.20000000000005px;top:248.98000000000002px" width="8" height="12" viewBox="0 0 8 12"><path d="M0.5 0.5 L7 6 L0.5 11.5Z" fill="#6e6e6e"/></svg><svg style="left:146.4000000000001px;top:246.98000000000002px" width="18" height="17" viewBox="0 0 18 17"><path d="M1.5 15 L1.5 2.5 Q1.5 1 3 1 L7 1 Q8 1 8.5 2 L9.3 3.5 L15.5 3.5 Q16.5 3.5 16.5 4.8 L16.5 15Z" fill="#4e7a3a"/><rect x="1" y="5.2" width="16" height="10.8" rx="1.5" fill="#7db365" stroke="#4e7a3a" stroke-width="0.9"/><rect x="2" y="6.2" width="14" height="1.2" fill="#96c980" opacity=".8"/></svg><div class="t" style="left:171px;top:248.10px;font-size:13.33px;letter-spacing:0.27px;color:#222">Group</div><div class="cb" style="left:4px;top:271px"><svg style="left:0;top:0" width="14" height="14" viewBox="0 0 14 14"><path d="M2.5 7.2 L5.6 10.6 L12 2.6" fill="none" stroke="#2a2a2a" stroke-width="2.3" stroke-linecap="round" stroke-linejoin="round"/></svg></div><svg style="left:112.90000000000009px;top:273.20000000000005px" width="8" height="12" viewBox="0 0 8 12"><path d="M0.5 0.5 L7 6 L0.5 11.5Z" fill="#6e6e6e"/></svg><svg style="left:136.70000000000005px;top:271.20000000000005px" width="18" height="17" viewBox="0 0 18 17"><path d="M1.5 15 L1.5 2.5 Q1.5 1 3 1 L7 1 Q8 1 8.5 2 L9.3 3.5 L15.5 3.5 Q16.5 3.5 16.5 4.8 L16.5 15Z" fill="#4e7a3a"/><rect x="1" y="5.2" width="16" height="10.8" rx="1.5" fill="#7db365" stroke="#4e7a3a" stroke-width="0.9"/><rect x="2" y="6.2" width="14" height="1.2" fill="#96c980" opacity=".8"/></svg><div class="t" style="left:171px;top:272.32px;font-size:13.33px;letter-spacing:0.27px;color:#222">man</div><div class="cb" style="left:4px;top:295px"></div><svg style="left:136.70000000000005px;top:295.41999999999996px" width="18" height="17" viewBox="0 0 18 17"><path d="M1.5 15 L1.5 2.5 Q1.5 1 3 1 L7 1 Q8 1 8.5 2 L9.3 3.5 L15.5 3.5 Q16.5 3.5 16.5 4.8 L16.5 15Z" fill="#b97d14"/><rect x="1" y="5.2" width="16" height="10.8" rx="1.5" fill="#f0ae3c" stroke="#b97d14" stroke-width="0.9"/><rect x="2" y="6.2" width="14" height="1.2" fill="#f8c766" opacity=".8"/><path d="M6 8 L12 8 L9.6 10.6 L9.6 13.5 L8.4 13.5 L8.4 10.6Z" fill="#b07410" opacity=".85"/></svg><div class="t" style="left:171px;top:296.54px;font-size:13.33px;letter-spacing:0.27px;color:#222"></div></div><div class="a" style="left:1341px;top:493px;width:14px;height:297px;background:#dedede"></div><div class="th" style="left:1345px;top:497px;width:6.5px;height:163px;"></div><div class="a" style="left:1054px;top:790px;width:301px;height:13px;background:#dedede"></div><div class="th" style="left:1057px;top:793px;width:108px;height:8px;"></div><div class="a" style="left:1054px;top:803px;width:301px;height:42px;background:#efefef"></div><div class="a" style="left:1139.5px;top:813px;width:1px;height:24px;background:#d6d6d6"></div><div class="a" style="left:1302.5px;top:813px;width:1px;height:24px;background:#d6d6d6"></div><svg style="left:1326px;top:821px" width="11" height="7" viewBox="0 0 11 7"><path d="M0 0 L11 0 L5.5 6.5Z" fill="#222"/></svg>
<div class="a" style="left:0px;top:622px;width:385px;height:199px;background:#fff"></div><div class="a" style="left:164px;top:623px;width:1px;height:23px;background:#ededed"></div><div class="a" style="left:329px;top:623px;width:1px;height:23px;background:#ededed"></div><div class="a" style="left:358px;top:623px;width:1px;height:23px;background:#ededed"></div><div class="a" style="left:0px;top:646px;width:385px;height:1px;background:#e6e6e6"></div><div class="t hb" style="left:6.5px;top:627.92px;font-size:13.33px;letter-spacing:0.4px;">Name</div><div class="t hb" style="left:171.5px;top:627.92px;font-size:13.33px;letter-spacing:0.4px;">Value</div><div class="a" style="left:359px;top:622px;width:26px;height:24px;overflow:hidden"><div class="t hb" style="left:6px;top:5.92px;font-size:13.33px;letter-spacing:0.4px;">Typ</div></div><div class="a" style="left:0px;top:622px;width:385px;height:199px;overflow:hidden"><div class="t" style="left:42.3px;top:30.25px;font-size:12px;color:#222;">Z Depth</div><div class="a" style="left:169.6px;top:28.399999999999977px;width:158.5px;height:16px;overflow:hidden"><div class="t" style="left:0px;top:1.85px;font-size:12px;color:#222">0.000000</div></div><div class="a" style="left:363px;top:28.399999999999977px;width:22px;height:16px;overflow:hidden"><div class="t" style="left:0px;top:1.85px;font-size:12px;color:#222">rea</div></div><div class="t" style="left:42.3px;top:51.25px;font-size:12px;color:#222;">Amount</div><div class="a" style="left:169.6px;top:49.39999999999998px;width:158.5px;height:16px;overflow:hidden"><div class="t" style="left:0px;top:1.85px;font-size:12px;color:#222">1.000000</div></div><div class="a" style="left:363px;top:49.39999999999998px;width:22px;height:16px;overflow:hidden"><div class="t" style="left:0px;top:1.85px;font-size:12px;color:#222">rea</div></div><div class="t" style="left:42.3px;top:72.25px;font-size:12px;color:#222;">Blend Method</div><div class="a" style="left:169.6px;top:70.39999999999998px;width:158.5px;height:16px;overflow:hidden"><div class="t" style="left:0px;top:1.85px;font-size:12px;color:#222">Composite</div></div><div class="a" style="left:363px;top:70.39999999999998px;width:22px;height:16px;overflow:hidden"><div class="t" style="left:0px;top:1.85px;font-size:12px;color:#222">inte</div></div><div class="t" style="left:42.3px;top:93.25px;font-size:12px;color:#222;">Origin</div><div class="a" style="left:169.6px;top:91.39999999999998px;width:158.5px;height:16px;overflow:hidden"><div class="t" style="left:0px;top:1.85px;font-size:12px;color:#222">138.876925px,12.714575</div></div><div class="a" style="left:363px;top:91.39999999999998px;width:22px;height:16px;overflow:hidden"><div class="t" style="left:0px;top:1.85px;font-size:12px;color:#222">vect</div></div><div class="t" style="left:42.3px;top:114.25px;font-size:12px;color:#222;letter-spacing:.12px;">Transformation</div><div class="a" style="left:169.6px;top:112.39999999999998px;width:158.5px;height:16px;overflow:hidden"><div class="t" style="left:0px;top:1.85px;font-size:12px;color:#222">158.865071px,-31.435544</div></div><div class="a" style="left:363px;top:112.39999999999998px;width:22px;height:16px;overflow:hidden"><div class="t" style="left:0px;top:1.85px;font-size:12px;color:#222">tran</div></div><div class="t" style="left:42.3px;top:135.25px;font-size:12px;color:#222;">Canvas</div><div class="a" style="left:169.6px;top:133.39999999999998px;width:158.5px;height:16px;overflow:hidden"><div class="t" style="left:0px;top:1.85px;font-size:12px;color:#222">&lt;Group&gt;</div></div><div class="a" style="left:363px;top:133.39999999999998px;width:22px;height:16px;overflow:hidden"><div class="t" style="left:0px;top:1.85px;font-size:12px;color:#222">canv</div></div><div class="t" style="left:42.3px;top:156.25px;font-size:12px;color:#222;letter-spacing:.12px;">Time Offset</div><div class="a" style="left:169.6px;top:154.39999999999998px;width:158.5px;height:16px;overflow:hidden"><div class="t" style="left:0px;top:1.85px;font-size:12px;color:#222">0f</div></div><div class="a" style="left:363px;top:154.39999999999998px;width:22px;height:16px;overflow:hidden"><div class="t" style="left:0px;top:1.85px;font-size:12px;color:#222">time</div></div><div class="t" style="left:42.3px;top:177.25px;font-size:12px;color:#222;letter-spacing:.12px;">Children Lock</div><div class="a" style="left:363px;top:175.39999999999998px;width:22px;height:16px;overflow:hidden"><div class="t" style="left:0px;top:1.85px;font-size:12px;color:#222">bool</div></div><div class="t" style="left:42.3px;top:198.25px;font-size:12px;color:#222;">Outline Grow</div><div class="a" style="left:169.6px;top:196.39999999999998px;width:158.5px;height:16px;overflow:hidden"><div class="t" style="left:0px;top:1.85px;font-size:12px;color:#222">0.000000</div></div><div class="a" style="left:363px;top:196.39999999999998px;width:22px;height:16px;overflow:hidden"><div class="t" style="left:0px;top:1.85px;font-size:12px;color:#222">real</div></div></div><div class="a" style="left:167px;top:795.5px;width:18px;height:17px;border:1px solid #b8b8b8;border-radius:4px;background:linear-gradient(#fdfdfd,#ececec)"></div><svg style="left:8px;top:736px" width="8" height="12" viewBox="0 0 8 12"><path d="M0.5 0.5 L7 6 L0.5 11.5Z" fill="#666"/></svg><div class="a" style="left:385px;top:622px;width:13px;height:199px;background:#dedede"></div><div class="th" style="left:388.5px;top:627px;width:6.5px;height:119px;"></div><div class="a" style="left:0px;top:821px;width:398px;height:15px;background:#dedede"></div><div class="th" style="left:4px;top:825px;width:215px;height:8px;"></div><div class="a" style="left:0px;top:836px;width:398px;height:9px;background:#ececec"></div>
<div class="a" style="left:401px;top:622px;width:633px;height:200px;background:#fff"></div><div class="a" style="left:402px;top:622px;width:632px;height:25.6px;background:linear-gradient(#9b9b9b 0,#989898 44%,#838383 45%,#808080)"></div><div class="a" style="left:425.5px;top:634px;width:1.2px;height:5px;background:#333"></div><div class="a" style="left:459.5px;top:634px;width:1.2px;height:5px;background:#333"></div><div class="a" style="left:494.5px;top:634px;width:1.4px;height:14px;background:#3a3a3a"></div><div class="a" style="left:528.5px;top:634px;width:1.2px;height:5px;background:#333"></div><div class="a" style="left:562.5px;top:634px;width:1.2px;height:5px;background:#333"></div><div class="a" style="left:596.5px;top:634px;width:1.2px;height:5px;background:#333"></div><div class="a" style="left:630.5px;top:634px;width:1.2px;height:5px;background:#333"></div><div class="a" style="left:664.5px;top:634px;width:1.4px;height:14px;background:#3a3a3a"></div><div class="a" style="left:698.5px;top:634px;width:1.2px;height:5px;background:#333"></div><div class="a" style="left:732.5px;top:634px;width:1.2px;height:5px;background:#333"></div><div class="a" style="left:766.5px;top:634px;width:1.2px;height:5px;background:#333"></div><div class="a" style="left:801.5px;top:634px;width:1.2px;height:5px;background:#333"></div><div class="a" style="left:835.5px;top:634px;width:1.4px;height:14px;background:#3a3a3a"></div><div class="a" style="left:869.5px;top:634px;width:1.2px;height:5px;background:#333"></div><div class="a" style="left:903.5px;top:634px;width:1.2px;height:5px;background:#333"></div><div class="a" style="left:937.5px;top:634px;width:1.2px;height:5px;background:#333"></div><div class="a" style="left:971.5px;top:634px;width:1.2px;height:5px;background:#333"></div><div class="a" style="left:1005.5px;top:634px;width:1.4px;height:14px;background:#3a3a3a"></div><div class="t" style="left:497.2px;top:635.80px;font-size:13px;color:#333">120f</div><div class="t" style="left:667.7px;top:635.80px;font-size:13px;color:#333">240f</div><div class="t" style="left:838.2px;top:635.80px;font-size:13px;color:#333">360f</div><div class="a" style="left:1008.4px;top:630px;width:25.6px;height:18px;overflow:hidden"><div class="t" style="left:0px;top:5.80px;font-size:13px;color:#333">480f</div></div><svg style="left:455px;top:624.5px" width="13" height="7" viewBox="0 0 13 7"><path d="M0 0 L13 0 L6.5 6.5Z" fill="#000"/></svg><div class="a" style="left:686px;top:633px;width:4px;height:15px;background:#e9a52a;border-left:1px solid #c8861a;border-right:1px solid #c8861a"></div><svg style="left:400px;top:648px" width="640" height="174" viewBox="0 0 640 174"><path d="M61.4 0 V174" stroke="#777" stroke-width="1.2" stroke-dasharray="21 2.5"/><path d="M288.3 0 V174" stroke="#444" stroke-width="1.8" stroke-dasharray="21 2.5"/></svg><svg style="left:452.4px;top:733px" width="18" height="18" viewBox="0 0 18 18"><path d="M9 0.6 L17.4 9 L9 17.4 L0.6 9Z" fill="#c98218"/><path d="M9 0.6 L17.4 9 L9 17.4Z" fill="#b5720f"/><path d="M9 0.6 L17.4 9 L9 17.4 L0.6 9Z" fill="none" stroke="#4a3008" stroke-width="1"/></svg><svg style="left:452.4px;top:754px" width="18" height="18" viewBox="0 0 18 18"><path d="M9 0.6 L17.4 9 L9 17.4 L0.6 9Z" fill="#c98218"/><path d="M9 0.6 L17.4 9 L9 17.4Z" fill="#b5720f"/><path d="M9 0.6 L17.4 9 L9 17.4 L0.6 9Z" fill="none" stroke="#4a3008" stroke-width="1"/></svg><svg style="left:556.6px;top:754px" width="18" height="18" viewBox="0 0 18 18"><path d="M9 0.6 L17.4 9 L9 17.4 L0.6 9Z" fill="#c98218"/><path d="M9 0.6 L17.4 9 L9 17.4Z" fill="#b5720f"/><path d="M9 0.6 L17.4 9 L9 17.4 L0.6 9Z" fill="none" stroke="#4a3008" stroke-width="1"/></svg><svg style="left:593.6px;top:754px" width="18" height="18" viewBox="0 0 18 18"><path d="M9 0.6 L17.4 9 L9 17.4 L0.6 9Z" fill="#c98218"/><path d="M9 0.6 L17.4 9 L9 17.4Z" fill="#b5720f"/><path d="M9 0.6 L17.4 9 L9 17.4 L0.6 9Z" fill="none" stroke="#4a3008" stroke-width="1"/></svg><svg style="left:598.7px;top:754px" width="18" height="18" viewBox="0 0 18 18"><path d="M9 0.6 L17.4 9 L9 17.4 L0.6 9Z" fill="#c98218"/><path d="M9 0.6 L17.4 9 L9 17.4Z" fill="#b5720f"/><path d="M9 0.6 L17.4 9 L9 17.4 L0.6 9Z" fill="none" stroke="#4a3008" stroke-width="1"/></svg><svg style="left:610.2px;top:754px" width="18" height="18" viewBox="0 0 18 18"><path d="M9 0.6 L17.4 9 L9 17.4 L0.6 9Z" fill="#c98218"/><path d="M9 0.6 L17.4 9 L9 17.4Z" fill="#b5720f"/><path d="M9 0.6 L17.4 9 L9 17.4 L0.6 9Z" fill="none" stroke="#4a3008" stroke-width="1"/></svg><svg style="left:612.6px;top:754px" width="18" height="18" viewBox="0 0 18 18"><path d="M9 0.6 L17.4 9 L9 17.4 L0.6 9Z" fill="#c98218"/><path d="M9 0.6 L17.4 9 L9 17.4Z" fill="#b5720f"/><path d="M9 0.6 L17.4 9 L9 17.4 L0.6 9Z" fill="none" stroke="#4a3008" stroke-width="1"/></svg><svg style="left:616.3px;top:754px" width="18" height="18" viewBox="0 0 18 18"><path d="M9 0.6 L17.4 9 L9 17.4 L0.6 9Z" fill="#c98218"/><path d="M9 0.6 L17.4 9 L9 17.4Z" fill="#b5720f"/><path d="M9 0.6 L17.4 9 L9 17.4 L0.6 9Z" fill="none" stroke="#4a3008" stroke-width="1"/></svg><svg style="left:689.3px;top:754px" width="18" height="18" viewBox="0 0 18 18"><path d="M9 0.6 L17.4 9 L9 17.4 L0.6 9Z" fill="#c98218"/><path d="M9 0.6 L17.4 9 L9 17.4Z" fill="#b5720f"/><path d="M9 0.6 L17.4 9 L9 17.4 L0.6 9Z" fill="none" stroke="#4a3008" stroke-width="1"/></svg><svg style="left:693px;top:754px" width="18" height="18" viewBox="0 0 18 18"><path d="M9 0.6 L17.4 9 L9 17.4 L0.6 9Z" fill="#c98218"/><path d="M9 0.6 L17.4 9 L9 17.4Z" fill="#b5720f"/><path d="M9 0.6 L17.4 9 L9 17.4 L0.6 9Z" fill="none" stroke="#4a3008" stroke-width="1"/></svg><svg style="left:702.2px;top:754px" width="18" height="18" viewBox="0 0 18 18"><path d="M9 0.6 L17.4 9 L9 17.4 L0.6 9Z" fill="#c98218"/><path d="M9 0.6 L17.4 9 L9 17.4Z" fill="#b5720f"/><path d="M9 0.6 L17.4 9 L9 17.4 L0.6 9Z" fill="none" stroke="#4a3008" stroke-width="1"/></svg><svg style="left:752.5px;top:754px" width="18" height="18" viewBox="0 0 18 18"><path d="M9 0.6 L17.4 9 L9 17.4 L0.6 9Z" fill="#c98218"/><path d="M9 0.6 L17.4 9 L9 17.4Z" fill="#b5720f"/><path d="M9 0.6 L17.4 9 L9 17.4 L0.6 9Z" fill="none" stroke="#4a3008" stroke-width="1"/></svg><svg style="left:863.3px;top:754px" width="18" height="18" viewBox="0 0 18 18"><path d="M9 0.6 L17.4 9 L9 17.4 L0.6 9Z" fill="#c98218"/><path d="M9 0.6 L17.4 9 L9 17.4Z" fill="#b5720f"/><path d="M9 0.6 L17.4 9 L9 17.4 L0.6 9Z" fill="none" stroke="#4a3008" stroke-width="1"/></svg><svg style="left:931px;top:754px" width="18" height="18" viewBox="0 0 18 18"><path d="M9 0.6 L17.4 9 L9 17.4 L0.6 9Z" fill="#c98218"/><path d="M9 0.6 L17.4 9 L9 17.4Z" fill="#b5720f"/><path d="M9 0.6 L17.4 9 L9 17.4 L0.6 9Z" fill="none" stroke="#4a3008" stroke-width="1"/></svg><svg style="left:937px;top:754px" width="18" height="18" viewBox="0 0 18 18"><path d="M9 0.6 L17.4 9 L9 17.4 L0.6 9Z" fill="#c98218"/><path d="M9 0.6 L17.4 9 L9 17.4Z" fill="#b5720f"/><path d="M9 0.6 L17.4 9 L9 17.4 L0.6 9Z" fill="none" stroke="#4a3008" stroke-width="1"/></svg><svg style="left:943px;top:754px" width="18" height="18" viewBox="0 0 18 18"><path d="M9 0.6 L17.4 9 L9 17.4 L0.6 9Z" fill="#c98218"/><path d="M9 0.6 L17.4 9 L9 17.4Z" fill="#b5720f"/><path d="M9 0.6 L17.4 9 L9 17.4 L0.6 9Z" fill="none" stroke="#4a3008" stroke-width="1"/></svg><svg style="left:949px;top:754px" width="18" height="18" viewBox="0 0 18 18"><path d="M9 0.6 L17.4 9 L9 17.4 L0.6 9Z" fill="#c98218"/><path d="M9 0.6 L17.4 9 L9 17.4Z" fill="#b5720f"/><path d="M9 0.6 L17.4 9 L9 17.4 L0.6 9Z" fill="none" stroke="#4a3008" stroke-width="1"/></svg><svg style="left:955px;top:754px" width="18" height="18" viewBox="0 0 18 18"><path d="M9 0.6 L17.4 9 L9 17.4 L0.6 9Z" fill="#c98218"/><path d="M9 0.6 L17.4 9 L9 17.4Z" fill="#b5720f"/><path d="M9 0.6 L17.4 9 L9 17.4 L0.6 9Z" fill="none" stroke="#4a3008" stroke-width="1"/></svg><svg style="left:973px;top:754px" width="18" height="18" viewBox="0 0 18 18"><circle cx="9" cy="9" r="7.6" fill="#555" stroke="#333" stroke-width="1"/></svg><svg style="left:979px;top:754px" width="18" height="18" viewBox="0 0 18 18"><circle cx="9" cy="9" r="7.6" fill="#555" stroke="#333" stroke-width="1"/></svg><svg style="left:986px;top:754px" width="18" height="18" viewBox="0 0 18 18"><circle cx="9" cy="9" r="7.6" fill="#555" stroke="#333" stroke-width="1"/></svg><svg style="left:1002px;top:754px" width="18" height="18" viewBox="0 0 18 18"><path d="M9 0.6 L17.4 9 L9 17.4 L0.6 9Z" fill="#c98218"/><path d="M9 0.6 L17.4 9 L9 17.4Z" fill="#b5720f"/><path d="M9 0.6 L17.4 9 L9 17.4 L0.6 9Z" fill="none" stroke="#4a3008" stroke-width="1"/></svg><svg style="left:1011.5px;top:754px" width="18" height="18" viewBox="0 0 18 18"><path d="M9 0.6 L17.4 9 L9 17.4 L0.6 9Z" fill="#c98218"/><path d="M9 0.6 L17.4 9 L9 17.4Z" fill="#b5720f"/><path d="M9 0.6 L17.4 9 L9 17.4 L0.6 9Z" fill="none" stroke="#4a3008" stroke-width="1"/></svg><div class="a" style="left:1034px;top:622px;width:17px;height:200px;background:linear-gradient(90deg,#fff 0,#fff 20%,#e3e3e3 38%,#e3e3e3)"></div><div class="th" style="left:1042.5px;top:626px;width:6.5px;height:120px;"></div><div class="a" style="left:401px;top:822px;width:637px;height:14.6px;background:#dedede"></div><div class="a" style="left:1038px;top:822px;width:13px;height:14.6px;background:#fff"></div><div class="th" style="left:475.5px;top:825.5px;width:558px;height:7.5px;"></div><div class="a" style="left:401px;top:836px;width:650px;height:9px;background:#ececec"></div>
<svg style="left:13.5px;top:95.5px" width="20" height="20" viewBox="0 0 20 20"><ellipse cx="11" cy="17.6" rx="5" ry="1.2" fill="#000" opacity=".15"/><path d="M5.2 2.5 L5.2 15.5 L8.6 12.7 L10.9 17.2 L13.8 16 L11.7 11.5 L16 10.4 Z" fill="#c3d1e6" stroke="#44628e" stroke-width="1.2" stroke-linejoin="round"/></svg><svg style="left:60.5px;top:95.3px" width="20" height="20" viewBox="0 0 20 20"><ellipse cx="10" cy="18.3" rx="5" ry="1.1" fill="#000" opacity=".15"/><path d="M10 1.5 L13.4 5.6 L11.6 5.6 L11.6 8.4 L14.4 8.4 L14.4 6.6 L18.5 10 L14.4 13.4 L14.4 11.6 L11.6 11.6 L11.6 14.4 L13.4 14.4 L10 18.5 L6.6 14.4 L8.4 14.4 L8.4 11.6 L5.6 11.6 L5.6 13.4 L1.5 10 L5.6 6.6 L5.6 8.4 L8.4 8.4 L8.4 5.6 L6.6 5.6 Z" fill="#7c9fd3" stroke="#4a6fae" stroke-width=".9" stroke-linejoin="round"/><circle cx="10" cy="10" r="2.8" fill="#a9c2e6"/></svg><svg style="left:107.5px;top:95.5px" width="20" height="20" viewBox="0 0 20 20"><rect x="1.5" y="2.5" width="9" height="7.5" fill="#7d9fd2" stroke="#4a6fae" stroke-width="1"/><rect x="5" y="5.5" width="14" height="11.8" fill="#c5d6ee" stroke="#5c84c2" stroke-width="1.2"/><rect x="5" y="5.5" width="6" height="5" fill="#5c84c2" opacity=".75"/><path d="M15.8 14 L12.5 14 L15.8 10.8Z" fill="#fff" stroke="#5c84c2" stroke-width=".5"/></svg><svg style="left:13.5px;top:127px" width="20" height="20" viewBox="0 0 20 20"><rect x="2.5" y="2.5" width="10" height="9" fill="#9db7de" stroke="#5c84c2" stroke-width=".9" stroke-dasharray="2 1"/><rect x="6.4" y="6.2" width="9" height="8.2" transform="rotate(40 10.9 10.3)" fill="#9cb8df" stroke="#4a6fae" stroke-width="1.1"/><path d="M14 3 L17.6 4.6 L15.2 7.4Z M3 13.2 L6.4 15.4 L2.8 17.2Z" fill="#5c84c2"/><path d="M3.4 15.5 C7 18 12 18 15 16" fill="none" stroke="#7c9fd3" stroke-width="1.3"/></svg><svg style="left:60.5px;top:127.19999999999999px" width="20" height="20" viewBox="0 0 20 20"><ellipse cx="10" cy="18.4" rx="6" ry="1" fill="#000" opacity=".12"/><path d="M1.5 4.2 L18.5 1.6 L18.5 18 L1.5 15.2 Z" fill="#6f95d0" stroke="#3e64a0" stroke-width="1.1" stroke-linejoin="round"/><path d="M3.5 6.4 L16.5 4.2 L16.5 15.6 L3.5 13.2Z" fill="#a9c4ea" opacity=".8"/><path d="M4.5 9.8 L8.8 7.4 L8.8 12.2Z M15.6 9.8 L11.2 7 L11.2 12.6Z" fill="#e4eefb"/></svg><svg style="left:107.6px;top:126.80000000000001px" width="20" height="20" viewBox="0 0 20 20"><ellipse cx="10" cy="18.2" rx="6" ry="1.2" fill="#000" opacity=".15"/><circle cx="10" cy="10" r="7.8" fill="#efefef" stroke="#6f6f6f" stroke-width="1.1"/></svg><svg style="left:13.3px;top:159px" width="20" height="20" viewBox="0 0 20 20"><rect x="2.2" y="2.8" width="15.2" height="14.2" rx=".8" fill="#efefef" stroke="#808080" stroke-width="1.1"/><path d="M2.2 17 H17.4" stroke="#666" stroke-width="1.2"/></svg><svg style="left:60.5px;top:159.4px" width="20" height="20" viewBox="0 0 20 20"><ellipse cx="10" cy="18.2" rx="5.5" ry="1.1" fill="#000" opacity=".15"/><path d="M10 1.8 L12.3 7.6 L18.4 8 L13.7 12 L15.2 18 L10 14.7 L4.8 18 L6.3 12 L1.6 8 L7.7 7.6 Z" fill="#f0f0f0" stroke="#606060" stroke-width="1.1" stroke-linejoin="round"/></svg><svg style="left:107.6px;top:159px" width="20" height="20" viewBox="0 0 20 20"><ellipse cx="10" cy="18.6" rx="5.5" ry="1" fill="#000" opacity=".15"/><path d="M8.6 2.4 L18.6 12 L14.6 15.6 L8.6 10 L5.2 12.6 L1.6 9.4 Z" fill="#ededed" stroke="#606060" stroke-width="1.1" stroke-linejoin="round"/></svg><svg style="left:13.3px;top:191px" width="20" height="20" viewBox="0 0 20 20"><defs><linearGradient id="gq" x1="0" x2="1"><stop offset="0" stop-color="#8e8e8e"/><stop offset="1" stop-color="#ededed"/></linearGradient></defs><rect x="2" y="2.4" width="15.6" height="14.8" rx=".8" fill="url(#gq)" stroke="#8a8a8a" stroke-width="1.1"/><path d="M2 17.2 H17.6" stroke="#666" stroke-width="1.2"/></svg><svg style="left:60.5px;top:191.4px" width="20" height="20" viewBox="0 0 20 20"><path d="M4 17 C3 8 5 3 10 3 C14 3 15 6 15 9" fill="none" stroke="#111" stroke-width="2.2"/><circle cx="4" cy="16.5" r="1.6" fill="#e8b020" stroke="#222" stroke-width=".6"/><circle cx="4.4" cy="10.5" r="1.5" fill="#2aa0c8" stroke="#222" stroke-width=".6"/><circle cx="5.8" cy="5" r="1.5" fill="#e8b020" stroke="#222" stroke-width=".6"/><path d="M12.2 9 L17.6 9 L17.2 14 L15 18 L13 14Z" fill="#e9c88a" stroke="#6b5530" stroke-width=".8"/><path d="M13.4 14.5 L16.6 14.5 L15 18.4Z" fill="#4a7ab8"/></svg><svg style="left:107.6px;top:191px" width="20" height="20" viewBox="0 0 20 20"><path d="M12 15 C14 16.5 17 15 19 17.5 M13 17 L17.5 18.5 M11.5 17.8 L9.5 18.8" stroke="#4a78c0" stroke-width="1.2" fill="none"/><rect x="5.6" y="2" width="6.8" height="3.6" rx="1" fill="#2b2b2b"/><path d="M4.4 7 C4.4 5.6 5.4 5.2 6.2 5.2 L11.8 5.2 C12.8 5.2 13.6 5.8 13.6 7 L13.6 15 C13.6 16.2 12.8 16.6 12 16.6 L6 16.6 C5 16.6 4.4 16 4.4 15Z" fill="#1d3358" stroke="#10192e" stroke-width=".8"/><path d="M5.4 7.4 H12.6 V10 H5.4Z" fill="#c9d6ea" opacity=".75"/></svg><svg style="left:13.3px;top:223.4px" width="20" height="20" viewBox="0 0 20 20"><path d="M5.5 1.5 L11.6 12.5 M14.5 1.5 L8.4 12.5" stroke="#b9b9b9" stroke-width="2.2" stroke-linecap="round"/><path d="M5.5 1.5 L11.2 12 M14.5 1.5 L8.8 12" stroke="#efefef" stroke-width=".8"/><ellipse cx="5.8" cy="15" rx="3.2" ry="2.6" fill="none" stroke="#cc3322" stroke-width="1.8" transform="rotate(-25 5.8 15)"/><ellipse cx="14.2" cy="15" rx="3.2" ry="2.6" fill="none" stroke="#cc3322" stroke-width="1.8" transform="rotate(25 14.2 15)"/><circle cx="10" cy="10.6" r="1" fill="#777"/></svg><svg style="left:60.5px;top:223.2px" width="20" height="20" viewBox="0 0 20 20"><ellipse cx="12" cy="18.4" rx="5" ry="1" fill="#000" opacity=".15"/><path d="M3.4 1.8 C8 1.6 13 5 14 10 C14.6 13.4 15.4 15.6 17.2 17.8 C12 19 9 16.6 8.2 13 C7.4 9 7 5 3.4 1.8Z" fill="#000"/></svg><svg style="left:108px;top:223.2px" width="20" height="20" viewBox="0 0 20 20"><ellipse cx="11.5" cy="17.6" rx="6" ry="1.8" fill="#000" opacity=".55"/><path d="M2.4 7 L5.6 6 L5.2 15.4 L2.8 15.4Z" fill="#4a78b8"/><path d="M5.4 7.2 L14.6 3.6 L18.2 12.4 L9.4 16.8Z" fill="#f1f1f1" stroke="#555" stroke-width="1" stroke-linejoin="round"/><path d="M5.4 7.2 L14.6 3.6 L15.4 5.6 L6.2 9.4Z" fill="#cfd6de"/><path d="M9.6 5.2 C9 1.8 13 0.6 14.2 3.6" fill="none" stroke="#666" stroke-width="1.1"/></svg><svg style="left:13px;top:255.2px" width="20" height="20" viewBox="0 0 20 20"><path d="M4.4 17 L17 8.8" stroke="#000" stroke-width="1.4" opacity=".18"/><path d="M3.2 16.8 L4.2 13.4 L11 6.4 L13.6 9 L6.6 15.8 Z" fill="#4a78c0" stroke="#1e3e78" stroke-width=".9" stroke-linejoin="round"/><path d="M5 14 L11 7.8" stroke="#bcd2f2" stroke-width="1"/><path d="M10.2 5.6 L14.4 9.8" stroke="#222" stroke-width="2.4" stroke-linecap="round"/><ellipse cx="14.6" cy="5.2" rx="3.4" ry="2.6" transform="rotate(-45 14.6 5.2)" fill="#2a2a2a"/></svg><svg style="left:60.5px;top:255.3px" width="20" height="20" viewBox="0 0 20 20"><defs><linearGradient id="ga" x1="0" y1="0" x2="0" y2="1"><stop offset="0" stop-color="#8a8a8a"/><stop offset="1" stop-color="#2e2e2e"/></linearGradient></defs><path d="M7.6 1.6 L12.4 1.6 L18.4 17.4 L13.6 17.4 L12.7 14.4 L7.3 14.4 L6.4 17.4 L1.6 17.4 Z M8.4 11 L11.6 11 L10 5.8 Z" fill="url(#ga)" fill-rule="evenodd"/><path d="M1.6 17.4 H18.4" stroke="#222" stroke-width=".8"/></svg><svg style="left:107.8px;top:255.3px" width="20" height="20" viewBox="0 0 20 20"><path d="M4.5 18.2 L18 10" stroke="#000" stroke-width="1.6" opacity=".2"/><path d="M2 18 L3.4 13.4 L14.4 2.6 L17.6 5.6 L6.6 16.6 Z" fill="#dcb47e" stroke="#8a6a3c" stroke-width=".8" stroke-linejoin="round"/><path d="M4.6 14 L15 3.8" stroke="#f3dcb4" stroke-width="1.2"/><path d="M14.4 2.6 L15.6 1.6 C16.6 .8 17.8 1.4 18.4 2.2 C19 3 19 4.2 18.4 4.8 L17.6 5.6Z" fill="#cc4a3c"/><path d="M2 18 L3.4 13.4 L6.6 16.6Z" fill="#efd9b8"/><path d="M2 18 L2.6 16 L4 17.4Z" fill="#333"/></svg><svg style="left:13px;top:287px" width="20" height="20" viewBox="0 0 20 20"><path d="M5 18 L17 11" stroke="#000" stroke-width="1.6" opacity=".18"/><path d="M9.6 9.4 L15.2 2 C16 1 17.6 1.2 18.2 2 C18.8 2.8 18.6 4 17.8 4.8 L11.8 11.6Z" fill="#e6c07e" stroke="#a8843e" stroke-width=".7"/><path d="M2.4 17.8 C3 14 5 10.8 8.4 9.6 C9.6 9.4 10.4 9.4 10.8 10 C11.6 10.6 12 11.4 11.6 12.6 C10 16 6.4 17.4 2.4 17.8Z" fill="#4e4e4e" stroke="#2a2a2a" stroke-width=".6"/></svg><svg style="left:60.5px;top:287.5px" width="20" height="20" viewBox="0 0 20 20"><path d="M11.6 12 L17.4 16.8" stroke="#555" stroke-width="2.8" stroke-linecap="round"/><circle cx="8" cy="8" r="5.8" fill="#9ec0ec" stroke="#3e70b8" stroke-width="1.4"/><path d="M3.6 8.4 C5 10.8 11 10.8 12.4 8.4 C12 12 4 12 3.6 8.4Z" fill="#5c8cd0"/><path d="M4 6.4 C5.4 3.4 10.6 3.4 12 6.4" fill="none" stroke="#e4effc" stroke-width="1.2"/></svg><svg style="left:156px;top:98.7px" width="22" height="22" viewBox="0 0 22 22"><rect x="2.2" y="2.6" width="15.6" height="15.6" rx="1.8" fill="#fafafa" stroke="#9b9b9b" stroke-width="1.2"/><circle cx="15.8" cy="5.6" r="4.2" fill="#f6f04a"/><circle cx="15.8" cy="5.6" r="5.6" fill="#f6f04a" opacity=".35"/></svg><svg style="left:195px;top:100.2px" width="20" height="20" viewBox="0 0 20 20"><path d="M2 17.6 V3.8 H5" fill="none" stroke="#5877a8" stroke-width="1.2"/><path d="M4.2 10 V2 Q4.2 1 5.2 1 L12.6 1 L16 4.4 L16 10Z" fill="#f4f4f4" stroke="#8a8a8a" stroke-width="1"/><path d="M6.4 4 H11.6 M6.4 6 H13.6" stroke="#b4b4b4" stroke-width=".9"/><rect x="1.6" y="9" width="17" height="9.6" rx="1.4" fill="#5e93db" stroke="#2f5ea6" stroke-width="1.1"/><rect x="3" y="10.4" width="14.2" height="3" fill="#8fb8ee" opacity=".8"/></svg><svg style="left:232px;top:100.6px" width="20" height="20" viewBox="0 0 20 20"><rect x="1.4" y="3.2" width="17.2" height="14.8" rx="1.4" fill="#e3e3e3" stroke="#8b8b8b" stroke-width="1.1"/><rect x="3.4" y="12.8" width="13.2" height="3.6" fill="#bdbdbd"/><path d="M4.4 14.6 H15.6" stroke="#8b8b8b" stroke-width=".8" stroke-dasharray="1.2 1"/><path d="M5.6 1 C10 .4 12.6 2.6 12.6 6 L15.4 6 L10.6 11.4 L5.8 6 L8.6 6 C8.6 3.8 7.4 2.4 5.6 1Z" fill="#5b8bd0" stroke="#34609f" stroke-width=".9" stroke-linejoin="round"/><path d="M7.6 1.8 C10 2 11.2 3.8 11.2 6.6" fill="none" stroke="#b8d2f4" stroke-width=".9"/></svg><svg style="left:269.5px;top:100.6px" width="20" height="20" viewBox="0 0 20 20"><rect x="1.4" y="3.2" width="17.2" height="14.8" rx="1.4" fill="#e3e3e3" stroke="#8b8b8b" stroke-width="1.1"/><rect x="3.4" y="12.8" width="13.2" height="3.6" fill="#bdbdbd"/><path d="M4.4 14.6 H15.6" stroke="#8b8b8b" stroke-width=".8" stroke-dasharray="1.2 1"/><path d="M5.6 1 C10 .4 12.6 2.6 12.6 6 L15.4 6 L10.6 11.4 L5.8 6 L8.6 6 C8.6 3.8 7.4 2.4 5.6 1Z" fill="#5b8bd0" stroke="#34609f" stroke-width=".9" stroke-linejoin="round"/><path d="M7.6 1.8 C10 2 11.2 3.8 11.2 6.6" fill="none" stroke="#b8d2f4" stroke-width=".9"/><rect x="14.6" y="10.6" width="3" height="6.6" fill="#f4f4f4" stroke="#222" stroke-width=".9"/></svg><div class="t" style="left:308.4px;top:103.2px;font-size:7.4px;line-height:7.4px;color:#444;text-align:center;font-family:'DejaVu Sans Condensed','DejaVu Sans',sans-serif;letter-spacing:-.2px;font-stretch:condensed;width:17px">SAVE<br>ALL</div><svg style="left:357px;top:100px" width="20" height="20" viewBox="0 0 20 20"><path d="M1.4 6.6 L8 1.2 L8 4.4 C14 4 17.6 8 17.4 12.4 C17.2 15 16.4 17 15 18.6 C15.2 14.4 13.4 10.2 8 10.4 L8 13.4 Z" fill="#f7e428" stroke="#e59a1c" stroke-width="1.3" stroke-linejoin="round"/><path d="M4 6.8 L7.2 4.2 M8 6 C12 5.6 15 8 15.8 11" fill="none" stroke="#fdf6a0" stroke-width="1"/></svg><svg style="left:395.5px;top:100px" width="20" height="20" viewBox="0 0 20 20"><path d="M18.6 6.6 L12 1.2 L12 4.4 C6 4 2.4 8 2.6 12.4 C2.8 15 3.6 17 5 18.6 C4.8 14.4 6.6 10.2 12 10.4 L12 13.4 Z" fill="#ace88a" stroke="#8fcf72" stroke-width="1.3" stroke-linejoin="round"/></svg><svg style="left:445.5px;top:100px" width="20" height="20" viewBox="0 0 20 20"><rect x="2" y="8" width="16" height="10" rx=".8" fill="#484848"/><path d="M1.4 4.2 L17.2 1.2 L18 4.4 L2.2 7.6Z" fill="#484848"/><path d="M4.2 3.8 L6 6.6 M8 3.1 L9.8 5.9 M11.8 2.4 L13.6 5.2 M15.2 1.8 L16.8 4.4" stroke="#e9e9e9" stroke-width="1.4"/><path d="M4 8 L5.6 10.6 M8 8 L9.6 10.6 M12 8 L13.6 10.6 M16 8 L17.4 10.4" stroke="#d9d9d9" stroke-width="1.3"/><rect x="2" y="10.8" width="16" height=".8" fill="#888"/></svg><svg style="left:482.5px;top:100px" width="22" height="20" viewBox="0 0 22 20"><circle cx="6" cy="5.4" r="3.8" fill="#5a5a5a"/><circle cx="13.4" cy="4.6" r="4" fill="#5a5a5a"/><circle cx="6" cy="5.4" r="1.4" fill="#cfcfcf"/><circle cx="13.4" cy="4.6" r="1.5" fill="#cfcfcf"/><rect x="3" y="9" width="12.4" height="8.6" rx="1" fill="#5c5c5c"/><path d="M15.4 11.6 L19 10 L19 16.4 L15.4 14.8Z" fill="#4a7ab8"/><rect x="4.6" y="10.6" width="8" height="1.2" fill="#8a8a8a"/></svg><svg style="left:533px;top:100px" width="20" height="20" viewBox="0 0 20 20"><defs><radialGradient id="gt1"><stop offset=".35" stop-color="#bdbdbd"/><stop offset=".8" stop-color="#fafafa"/></radialGradient></defs><circle cx="10" cy="9.8" r="8.4" fill="url(#gt1)" stroke="#333" stroke-width="1.1"/><circle cx="10" cy="9.8" r="2.9" fill="#18e018" stroke="#0a7a0a" stroke-width=".7"/></svg><svg style="left:570.5px;top:100px" width="20" height="20" viewBox="0 0 20 20"><path d="M1.8 1.8 C8 3 8.4 8 10.2 9.8 C12.2 12 13.4 16.4 18.4 18.4" fill="none" stroke="#333" stroke-width="1.2"/><circle cx="10.2" cy="9.8" r="2.8" fill="#f3a531" stroke="#8a5a12" stroke-width=".8"/></svg><svg style="left:607.5px;top:100px" width="20" height="20" viewBox="0 0 20 20"><path d="M2 4.2 H13 M7.6 15.2 H18.6" stroke="#4b6e92" stroke-width="2"/><path d="M9.4 4.2 L13.4 15.2" stroke="#2b2b2b" stroke-width="1.2"/><circle cx="15.6" cy="4.2" r="2.9" fill="#f8d62a" stroke="#5a4a0a" stroke-width=".8"/><circle cx="5" cy="15.2" r="2.9" fill="#f8d62a" stroke="#5a4a0a" stroke-width=".8"/></svg><svg style="left:645px;top:100px" width="20" height="20" viewBox="0 0 20 20"><circle cx="8.8" cy="9.8" r="6.8" fill="none" stroke="#3a6aa4" stroke-width="2"/><circle cx="8.8" cy="9.8" r="5.6" fill="none" stroke="#9bbbe0" stroke-width=".7"/><circle cx="16.2" cy="9.8" r="2.9" fill="#22e6e6" stroke="#0a7a8a" stroke-width=".8"/></svg><svg style="left:683.5px;top:100px" width="20" height="20" viewBox="0 0 20 20"><path d="M2 1.8 C7 1.6 11.4 5 12.4 10 C13 13.4 14.4 16 17 18.4 C11.6 19.4 8.4 16.8 7.6 13 C6.8 9 6 5 2 1.8Z" fill="#000"/><circle cx="14.6" cy="9.8" r="2.9" fill="#d424c4" stroke="#6a0a62" stroke-width=".7"/></svg><svg style="left:720px;top:100px" width="20" height="20" viewBox="0 0 20 20"><path d="M3.4 18 H18.2" stroke="#6b7f8c" stroke-width="1.3"/><path d="M11.6 18 C11.6 15 10.4 12.8 8.8 11.6" fill="none" stroke="#6b7f8c" stroke-width="1"/><path d="M3.8 17.6 L15.2 4.8" stroke="#4c6a7a" stroke-width="3.2" stroke-linecap="round"/><path d="M3.8 17.6 L15.2 4.8" stroke="#8fb2c4" stroke-width="1.6" stroke-linecap="round"/><circle cx="15.6" cy="4.4" r="3.1" fill="#1424a8" stroke="#080f5a" stroke-width=".7"/></svg><svg style="left:771px;top:100px" width="20" height="20" viewBox="0 0 20 20"><path d="M5.4 1.6 V18.2 M10 1.6 V18.2 M14.8 1.6 V18.2 M1.8 5.4 H18.4 M1.8 10 H18.4 M1.8 14.6 H18.4" stroke="#585858" stroke-width="1.3"/></svg><svg style="left:808.5px;top:100px" width="20" height="20" viewBox="0 0 20 20"><path d="M6.4 3 V18.4 M13.6 9 V18.4 M1.6 8.4 H8 M1.6 14.8 H18.4" stroke="#585858" stroke-width="1.2"/><path d="M8 10.4 C6.4 5.6 9.6 1.8 13.4 2 C17.4 2.2 19.4 6.4 17.4 10.6 L14.6 9.4 C15.8 7 14.8 5 13.2 5 C11.4 5 10.2 7 11 9.4Z" fill="#a9a9a9" stroke="#4a4a4a" stroke-width=".9"/><path d="M1.6 6.4 L4.6 3.6 L7.4 6.4 L4.6 9.2Z" fill="#d42a1e"/><path d="M11.4 17.8 L13 12.6 L16.4 14Z" fill="#3a70c0"/></svg><svg style="left:858.5px;top:100px" width="20" height="20" viewBox="0 0 20 20"><path d="M10 1 C10.4 3 11 4 12.4 5 C16.4 6.6 18.4 9.4 18 12.6 C17.6 16.4 14.2 18.6 10 18.6 C5.8 18.6 2.4 16.4 2 12.6 C1.6 9.4 3.6 6.6 7.6 5 C9 4 9.6 3 10 1Z" fill="#c58c58" stroke="#7a4e26" stroke-width=".9"/><path d="M5 8.6 C7 7 10.6 6.8 13 8.2 C15.4 10 15.6 13.6 13.6 15.8 C10.6 17.4 6.6 16.6 5 14 C4 12 4 10.2 5 8.6Z" fill="#f3b8a8"/><path d="M6.4 9 L12.8 15.4 M9 7.8 L14.6 13.6 M5.4 11.6 L10 16.4" stroke="#dc3a2a" stroke-width="1.3"/><path d="M10 1.4 C9.6 3.4 8.6 4.6 7 5.6" stroke="#e8c090" stroke-width=".8" fill="none"/></svg><svg style="left:896px;top:100.3px" width="20" height="20" viewBox="0 0 20 20"><path d="M3 9 C3 4 8 1.6 12.6 3.6 L13.4 1.2 L17.8 6 L11 7.8 L11.8 5.6 C9 4.6 5.6 6 5.6 9Z" fill="#6c9be0" stroke="#3768b4" stroke-width=".9" stroke-linejoin="round"/><path d="M17 11 C17 16 12 18.4 7.4 16.4 L6.6 18.8 L2.2 14 L9 12.2 L8.2 14.4 C11 15.4 14.4 14 14.4 11Z" fill="#6c9be0" stroke="#3768b4" stroke-width=".9" stroke-linejoin="round"/><path d="M4.4 8 C5 5 8.6 3.6 11.6 4.4 M15.6 12 C15 15 11.4 16.4 8.4 15.6" fill="none" stroke="#c4dbf8" stroke-width=".9"/></svg><svg style="left:1024px;top:100.3px" width="20" height="20" viewBox="0 0 20 20"><path d="M6.2 1 H13.8 L19 6.2 V13.8 L13.8 19 H6.2 L1 13.8 V6.2Z" fill="#efb8b5" stroke="#e6a4a0" stroke-width="1"/><path d="M6.4 6.4 L13.6 13.6 M13.6 6.4 L6.4 13.6" stroke="#fff" stroke-width="2.6" stroke-linecap="round"/></svg><svg style="left:264.5px;top:541.5px" width="18" height="17" viewBox="0 0 18 17"><rect x="1" y="1" width="2.2" height="15" fill="#d4d4d4" stroke="#a2a2a2" stroke-width="1" stroke-linejoin="round"/><path d="M10 1 L10 16 L3.6 8.5Z M16.4 1 L16.4 16 L10 8.5Z" fill="#d4d4d4" stroke="#a2a2a2" stroke-width="1" stroke-linejoin="round"/></svg><svg style="left:300.5px;top:541.5px" width="20" height="17" viewBox="0 0 20 17"><path d="M11.4 1 L11.4 16 L5 8.5Z M17.8 1 L17.8 16 L11.4 8.5Z" fill="#d4d4d4" stroke="#a2a2a2" stroke-width="1" stroke-linejoin="round"/><path d="M2.8 .6 C4.4 .4 5.2 1.4 5 2.8 L4.8 12 C6 12.6 6.4 14 5.8 15.2 C5.2 16.4 3.6 16.8 2.6 16.2 C1.4 15.6 1 14.2 1.6 13 C1.8 12.6 2.2 12.2 2.6 12 L2.6 8 L1.4 7.4 L2.6 6.4 L2.6 4.8 L1.4 4 L2.6 3.2 Z" fill="#e2b653" stroke="#b98a2c" stroke-width=".7"/></svg><svg style="left:338.5px;top:541.5px" width="18" height="17" viewBox="0 0 18 17"><path d="M8.6 1 L8.6 16 L1.4 8.5Z M16.6 1 L16.6 16 L9.4 8.5Z" fill="#d4d4d4" stroke="#a2a2a2" stroke-width="1" stroke-linejoin="round"/></svg><svg style="left:377px;top:541.5px" width="16" height="17" viewBox="0 0 16 17"><path d="M1.4 1 L14.6 8.5 L1.4 16Z" fill="#d4d4d4" stroke="#a2a2a2" stroke-width="1" stroke-linejoin="round"/></svg><svg style="left:413.5px;top:541.5px" width="18" height="17" viewBox="0 0 18 17"><path d="M1.4 1 L1.4 16 L8.6 8.5Z M9.4 1 L9.4 16 L16.6 8.5Z" fill="#d4d4d4" stroke="#a2a2a2" stroke-width="1" stroke-linejoin="round"/></svg><svg style="left:450px;top:541.5px" width="20" height="17" viewBox="0 0 20 17"><path d="M1.4 1 L1.4 16 L7.8 8.5Z M7.8 1 L7.8 16 L14.2 8.5Z" fill="#d4d4d4" stroke="#a2a2a2" stroke-width="1" stroke-linejoin="round"/><path d="M14.8 .6 C16.4 .4 17.4 1.4 17.2 2.8 L17 12 C18.2 12.6 18.6 14 18 15.2 C17.4 16.4 15.8 16.8 14.8 16.2 C13.6 15.6 13.2 14.2 13.8 13 C14 12.6 14.4 12.2 14.8 12 L14.8 8 L13.6 7.4 L14.8 6.4 L14.8 4.8 L13.6 4 L14.8 3.2 Z" fill="#e2b653" stroke="#b98a2c" stroke-width=".7"/></svg><svg style="left:488px;top:541.5px" width="18" height="17" viewBox="0 0 18 17"><path d="M1.4 1 L1.4 16 L7.8 8.5Z M7.8 1 L7.8 16 L14.2 8.5Z" fill="#d4d4d4" stroke="#a2a2a2" stroke-width="1" stroke-linejoin="round"/><rect x="14.6" y="1" width="2.2" height="15" fill="#d4d4d4" stroke="#a2a2a2" stroke-width="1" stroke-linejoin="round"/></svg><svg style="left:525px;top:540px" width="20" height="20" viewBox="0 0 20 20"><path d="M2 18.4 L8 14" stroke="#9a9a9a" stroke-width="2.4" stroke-linecap="round" opacity=".8"/><path d="M5.4 11.6 L12.4 4.6 L16.2 8.4 L9.2 15.4 C7.4 16 5 13.6 5.4 11.6Z" fill="#2e5fa4" stroke="#183a70" stroke-width=".8"/><path d="M7 11.4 L12.6 5.8" stroke="#7fa6dc" stroke-width="1.1"/><path d="M13.2 4.4 L16.6 1.6 L18.8 3.8 L16.2 7.4Z" fill="#26364e"/></svg><svg style="left:153.8px;top:540.5px" width="18.4" height="18.4" viewBox="0 0 20 20"><defs><linearGradient id="gtm1" x1="0" x2="1"><stop offset="0" stop-color="#4aae22"/><stop offset=".36" stop-color="#88cc64"/><stop offset=".6" stop-color="#74a89a"/><stop offset="1" stop-color="#7f9cc4"/></linearGradient></defs><path d="M8.2 2.4 L18 1.8 C18.4 6 17.6 11 15.4 14.4 C13.6 17.2 10.4 18.4 7.4 17.6 C3.8 16.8 1.6 13.8 1.8 10 C2 5.8 4.6 2.8 8.2 2.4Z" fill="url(#gtm1)" stroke="#3b3f3a" stroke-width="1.7" stroke-linejoin="round"/><path d="M5.6 8.4 L13.8 7.4" stroke="#222" stroke-width="1.4"/><circle cx="9.6" cy="10.2" r="2" fill="none" stroke="#222" stroke-width="1.2"/></svg><svg style="left:1025px;top:540.8px" width="16" height="18" viewBox="0 0 16 18"><path d="M8 .8 C9.6 .8 10.4 2 10.4 3.2 C10.4 4.2 10 4.8 9.4 5.4 C11.4 5.6 12.6 6.6 13.2 8.4 L14.4 12.2 L12.8 12.8 L11.6 9.6 L11.2 12.6 L13.6 16.6 L15 16.8 L15 17.8 L10.6 17.8 L8 13.6 L5.4 17.8 L1 17.8 L1 16.8 L2.4 16.6 L4.8 12.6 L4.4 9.6 L3.2 12.8 L1.6 12.2 L2.8 8.4 C3.4 6.6 4.6 5.6 6.6 5.4 C6 4.8 5.6 4.2 5.6 3.2 C5.6 2 6.4 .8 8 .8Z" fill="#3f9f1c" stroke="#2a6a12" stroke-width=".9" stroke-linejoin="round"/><path d="M8 6 L8 12" stroke="#6cc83c" stroke-width="1.6" opacity=".7"/></svg><svg style="left:942px;top:539px" width="24" height="22" viewBox="0 0 24 22"><path d="M3.6 10.4 L21.6 1.6 L21.6 19.4Z" fill="#6f9ade"/><path d="M3.6 10.4 L14 5.4 L14 15.6Z" fill="#a9c6f0"/><path d="M8.6 9 V6.6 C8.6 3.6 13.6 3.6 13.6 6.6 V9" fill="none" stroke="#303438" stroke-width="1.6"/><rect x="6.8" y="8.6" width="8.6" height="7.6" rx="1.6" fill="#3b3f44" stroke="#25282b" stroke-width=".6"/><rect x="8" y="9.8" width="6" height="2" fill="#5a6068"/></svg><svg style="left:980px;top:539px" width="24" height="22" viewBox="0 0 24 22"><path d="M21.6 10.4 L3.6 1.6 L3.6 19.4Z" fill="#6f9ade"/><path d="M21.6 10.4 L11 5.4 L11 15.6Z" fill="#a9c6f0"/><path d="M10.8 9 V6.6 C10.8 3.6 15.8 3.6 15.8 6.6 V9" fill="none" stroke="#303438" stroke-width="1.6"/><rect x="9" y="8.6" width="8.6" height="7.6" rx="1.6" fill="#3b3f44" stroke="#25282b" stroke-width=".6"/><rect x="10.2" y="9.8" width="6" height="2" fill="#5a6068"/></svg><svg style="left:1119px;top:58px" width="19" height="19" viewBox="0 0 19 19"><rect x="1" y="1.4" width="6" height="15" fill="#f2a21e" stroke="#9a5a10" stroke-width=".7"/><path d="M1 4.6 H7 M1 8 H7 M1 11.4 H7" stroke="#7a4a10" stroke-width=".9"/><rect x="2" y="2.2" width="3" height="1.6" fill="#fbe27a"/><rect x="2" y="5.6" width="3" height="1.6" fill="#fbd04a"/><rect x="1" y="13.6" width="16.6" height="3.6" fill="#e9e9e9" stroke="#555" stroke-width=".7"/><rect x="1.6" y="14.2" width="2.8" height="2.4" fill="#e03a8a"/><rect x="5.2" y="14.2" width="2.4" height="2.4" fill="#333"/><rect x="8.6" y="14.2" width="2.6" height="2.4" fill="#b03ac0"/><rect x="12" y="14.2" width="2.2" height="2.4" fill="#7a3ab0"/><rect x="15" y="14.2" width="2" height="2.4" fill="#c04aa0"/><path d="M12.2 4.4 L16.4 8.6 L12.2 12.8 L8 8.6Z" fill="#4f7fc8" stroke="#2c4f8a" stroke-width=".8"/><path d="M10.6 8 L12.6 6 L14 7.4" fill="none" stroke="#dce8fa" stroke-width="1"/></svg><svg style="left:1210.5px;top:58.8px" width="18" height="18" viewBox="0 0 18 18"><circle cx="9" cy="9" r="8.3" fill="#4c7cc4" stroke="#3562a8" stroke-width=".8"/><circle cx="10" cy="4.6" r="1.5" fill="#fff"/><path d="M6.6 7.6 L10.6 7.2 L9 12.6 C8.8 13.4 9.4 13.6 10.6 12.8 L10.8 13.6 C9 15 6.4 15 6.8 13 L8 8.6 L6.4 8.4Z" fill="#fff"/></svg><svg style="left:1068.6px;top:204.2px" width="16" height="16" viewBox="0 0 16 16"><path d="M5.9 1.4 H10.1 V5.9 H14.6 V10.1 H10.1 V14.6 H5.9 V10.1 H1.4 V5.9 H5.9Z" fill="#8fb4ea" stroke="#3d6bb4" stroke-width="1.3" stroke-linejoin="round"/><path d="M7 3 H9 V7 H13 V9 H9 V13 H7 V9 H3 V7 H7Z" fill="#c9ddf8" opacity=".8"/></svg><svg style="left:1104.2px;top:203px" width="20" height="20" viewBox="0 0 20 20"><rect x="1.4" y="3.2" width="17.2" height="14.8" rx="1.4" fill="#e3e3e3" stroke="#8b8b8b" stroke-width="1.1"/><rect x="3.4" y="12.8" width="13.2" height="3.6" fill="#bdbdbd"/><path d="M4.4 14.6 H15.6" stroke="#8b8b8b" stroke-width=".8" stroke-dasharray="1.2 1"/><path d="M5.6 1 C10 .4 12.6 2.6 12.6 6 L15.4 6 L10.6 11.4 L5.8 6 L8.6 6 C8.6 3.8 7.4 2.4 5.6 1Z" fill="#5b8bd0" stroke="#34609f" stroke-width=".9" stroke-linejoin="round"/><path d="M7.6 1.8 C10 2 11.2 3.8 11.2 6.6" fill="none" stroke="#b8d2f4" stroke-width=".9"/></svg><svg style="left:1141.6px;top:202px" width="20" height="20" viewBox="0 0 20 20"><path d="M2 17.6 V3.8 H5" fill="none" stroke="#5877a8" stroke-width="1.2"/><path d="M4.2 10 V2 Q4.2 1 5.2 1 L12.6 1 L16 4.4 L16 10Z" fill="#f4f4f4" stroke="#8a8a8a" stroke-width="1"/><path d="M6.4 4 H11.6 M6.4 6 H13.6" stroke="#b4b4b4" stroke-width=".9"/><rect x="1.6" y="9" width="17" height="9.6" rx="1.4" fill="#5e93db" stroke="#2f5ea6" stroke-width="1.1"/><rect x="3" y="10.4" width="14.2" height="3" fill="#8fb8ee" opacity=".8"/></svg><svg style="left:1179px;top:202.2px" width="20" height="20" viewBox="0 0 20 20"><path d="M3 9 C3 4 8 1.6 12.6 3.6 L13.4 1.2 L17.8 6 L11 7.8 L11.8 5.6 C9 4.6 5.6 6 5.6 9Z" fill="#6c9be0" stroke="#3768b4" stroke-width=".9" stroke-linejoin="round"/><path d="M17 11 C17 16 12 18.4 7.4 16.4 L6.6 18.8 L2.2 14 L9 12.2 L8.2 14.4 C11 15.4 14.4 14 14.4 11Z" fill="#6c9be0" stroke="#3768b4" stroke-width=".9" stroke-linejoin="round"/><path d="M4.4 8 C5 5 8.6 3.6 11.6 4.4 M15.6 12 C15 15 11.4 16.4 8.4 15.6" fill="none" stroke="#c4dbf8" stroke-width=".9"/></svg><svg style="left:1085px;top:245px" width="20" height="20" viewBox="0 0 20 20"><ellipse cx="10" cy="17.4" rx="5" ry="1" fill="#000" opacity=".12"/><path d="M1.6 15.2 L8.4 8.6 C7.6 5.8 8.6 3 11 1.8 C13.6 .6 16.8 1.4 18.2 4 C19.6 6.6 18.6 9.8 16 11.2 C14.4 12 12.6 12 11.2 11.4 L9.4 13.2 L7.6 13 L7.4 15 L5.6 15 L5.4 17 L2.4 17.6Z" fill="#e6be52" stroke="#b98c2a" stroke-width="1" stroke-linejoin="round"/><circle cx="14.8" cy="5.2" r="1.9" fill="#d6d6d6" stroke="#b98c2a" stroke-width=".8"/><path d="M4 15 L10 9.4" stroke="#f6e29a" stroke-width="1"/></svg><svg style="left:1156px;top:245px" width="20" height="20" viewBox="0 0 20 20"><ellipse cx="10" cy="17.8" rx="5" ry="1" fill="#000" opacity=".1"/><path d="M6 5.6 L11.6 1.2 L11.6 4 C16.4 4 19 7.6 18.6 11.4 C18.4 13.8 17.6 15.6 16.4 17 C16.6 13.4 15.4 9.8 11.6 9.8 L11.6 12.4 Z" fill="#f4e6b8" stroke="#e8d394" stroke-width="1"/><path d="M1.4 6.6 L7 2.2 L7 5 C11.8 5 14.4 8.6 14 12.4 C13.8 14.8 13 16.6 11.8 18 C12 14.4 10.8 10.8 7 10.8 L7 13.4 Z" fill="#f3dc7c" stroke="#e6c45c" stroke-width="1"/></svg><svg style="left:1068.6px;top:419.7px" width="16" height="16" viewBox="0 0 16 16"><path d="M5.9 1.4 H10.1 V5.9 H14.6 V10.1 H10.1 V14.6 H5.9 V10.1 H1.4 V5.9 H5.9Z" fill="#8fb4ea" stroke="#3d6bb4" stroke-width="1.3" stroke-linejoin="round"/><path d="M7 3 H9 V7 H13 V9 H9 V13 H7 V9 H3 V7 H7Z" fill="#c9ddf8" opacity=".8"/></svg><svg style="left:1105px;top:418.8px" width="18" height="18" viewBox="0 0 18 18"><rect x="1" y="1" width="7" height="7" rx=".8" fill="#fbf3c8" stroke="#333" stroke-width="1.3"/><rect x="9.6" y="9.6" width="7.4" height="7.4" rx=".8" fill="#fbf3c8" stroke="#333" stroke-width="1.3"/><path d="M3.4 9.4 V13.4 H6.4" fill="none" stroke="#111" stroke-width="1.8"/><path d="M6 11 L8.8 13.4 L6 15.8Z" fill="#111"/></svg><svg style="left:1141.4px;top:418.4px" width="20" height="20" viewBox="0 0 20 20"><path d="M4 13 L3.4 19 M6.4 13 L6 19.4 M8.6 13 L9 19 M11.4 13 L11 19.4 M13.6 13 L14 19 M16 13 L16.6 19" stroke="#b9b9b9" stroke-width="1.5"/><rect x="4" y="1.2" width="12" height="6" rx="1" fill="#d9d9d9" stroke="#9a9a9a" stroke-width=".8"/><rect x="1.2" y="4.6" width="17.6" height="8.4" rx="1.6" fill="#5e93db" stroke="#2f5ea6" stroke-width="1.1"/><rect x="3.4" y="7.4" width="13.2" height="2" fill="#e8f0fb"/><path d="M3.4 10.2 H16.6" stroke="#2f5ea6" stroke-width=".8"/></svg><svg style="left:1180.6px;top:419px" width="17" height="18" viewBox="0 0 17 18"><rect x=".8" y=".8" width="15.2" height="16.2" rx="1.2" fill="#f6f6f6" stroke="#8a8a8a" stroke-width="1.1"/><path d="M4.4 5.6 C4.6 3.8 6.8 3 8.2 4.2 L6.6 5.8 L7.4 7.2 L9.2 7 L10.2 5.2 C11.2 6.6 10.6 8.4 9.4 9 L13 12.4 L11.6 13.8 L7.8 10 C6.4 10.4 4.4 9 4.4 5.6Z" fill="#333"/></svg><svg style="left:1085.5px;top:461.5px" width="20" height="19" viewBox="0 0 20 19"><path d="M1.6 17 L3.2 12.4 L18.2 11.8 L16.6 16.6Z" fill="#9db4d2" stroke="#5f7fa8" stroke-width=".8"/><path d="M1.6 13.4 L3.2 8.8 L18.2 8.2 L16.6 13Z" fill="#aec4e0" stroke="#5f7fa8" stroke-width=".8"/><path d="M2.2 9.6 L4.4 1.6 L18.6 1 L16.6 9Z" fill="#bdd3ec" stroke="#5f7fa8" stroke-width=".9"/><path d="M5.4 2.6 L12 2.4 L7 8.4 L3.6 8.6Z" fill="#e6f0fb" opacity=".8"/></svg><svg style="left:1066.5px;top:814.5px" width="20" height="19" viewBox="0 0 20 19"><path d="M10 1 L18.2 9.6 L13.6 9.6 L13.6 17.6 L6.4 17.6 L6.4 9.6 L1.8 9.6Z" fill="#b2e89a" stroke="#8dcc74" stroke-width="1.2" stroke-linejoin="round"/><path d="M10 4 L14 8.4 L11.8 8.4 L11.8 15.6 L8.2 15.6 L8.2 8.4 L6 8.4Z" fill="#d4f4c4" opacity=".8"/></svg><svg style="left:1104px;top:814.5px" width="20" height="19" viewBox="0 0 20 19"><path d="M10 18 L18.2 9.4 L13.6 9.4 L13.6 1.4 L6.4 1.4 L6.4 9.4 L1.8 9.4Z" fill="#b2e89a" stroke="#8dcc74" stroke-width="1.2" stroke-linejoin="round"/><path d="M10 15 L14 10.6 L11.8 10.6 L11.8 3.4 L8.2 3.4 L8.2 10.6 L6 10.6Z" fill="#d4f4c4" opacity=".8"/></svg><svg style="left:1156px;top:815.2px" width="18" height="18" viewBox="0 0 18 18"><rect x="1" y="1" width="7" height="7" rx=".8" fill="#fbf3c8" stroke="#333" stroke-width="1.3"/><rect x="9.6" y="9.6" width="7.4" height="7.4" rx=".8" fill="#fbf3c8" stroke="#333" stroke-width="1.3"/><path d="M3.4 9.4 V13.4 H6.4" fill="none" stroke="#111" stroke-width="1.8"/><path d="M6 11 L8.8 13.4 L6 15.8Z" fill="#111"/></svg><svg style="left:1193.2px;top:816.8px" width="18" height="17" viewBox="0 0 18 17"><path d="M1.5 15 L1.5 2.5 Q1.5 1 3 1 L7 1 Q8 1 8.5 2 L9.3 3.5 L15.5 3.5 Q16.5 3.5 16.5 4.8 L16.5 15Z" fill="#4e7a3a"/><rect x="1" y="5.2" width="16" height="10.8" rx="1.5" fill="#7db365" stroke="#4e7a3a" stroke-width="0.9"/><rect x="2" y="6.2" width="14" height="1.2" fill="#96c980" opacity=".8"/></svg><svg style="left:1230px;top:816.5px" width="19" height="17" viewBox="0 0 19 17"><path d="M3 14 V3.4 Q3 2.4 4 2.4 L8 2.4 L9.4 4 L15 4 Q16 4 16 5 V8" fill="#5d8c46" stroke="#45702f" stroke-width=".8"/><rect x="5.2" y="5.6" width="10.4" height="7.4" fill="#e4e4e4" stroke="#777" stroke-width=".8"/><path d="M1 9.6 L3.6 15.8 L16.4 15.8 L18.4 9.6 L15.6 9.6 L14.8 12.6 L4.8 12.6 L4 9.6Z" fill="#7db365" stroke="#4e7a3a" stroke-width=".9"/></svg><svg style="left:1267.2px;top:814.8px" width="20" height="20" viewBox="0 0 20 20"><path d="M4 13 L3.4 19 M6.4 13 L6 19.4 M8.6 13 L9 19 M11.4 13 L11 19.4 M13.6 13 L14 19 M16 13 L16.6 19" stroke="#b9b9b9" stroke-width="1.5"/><rect x="4" y="1.2" width="12" height="6" rx="1" fill="#d9d9d9" stroke="#9a9a9a" stroke-width=".8"/><rect x="1.2" y="4.6" width="17.6" height="8.4" rx="1.6" fill="#5e93db" stroke="#2f5ea6" stroke-width="1.1"/><rect x="3.4" y="7.4" width="13.2" height="2" fill="#e8f0fb"/><path d="M3.4 10.2 H16.6" stroke="#2f5ea6" stroke-width=".8"/></svg><svg style="left:33px;top:592.5px" width="18" height="16" viewBox="0 0 18 16"><rect x=".9" y=".9" width="16" height="14" rx="1" fill="#e9e9e9" stroke="#767676" stroke-width="1.5"/><path d="M4.6 4 V10.6 M8.6 4 V10.6 M12.6 4 V10.6" stroke="#666" stroke-width="1"/><rect x="3.6" y="5" width="2" height="2.2" fill="#444"/><rect x="7.6" y="7" width="2" height="2.2" fill="#444"/><rect x="11.6" y="5.4" width="2" height="2.2" fill="#444"/><path d="M5 12.4 H12.4" stroke="#999" stroke-width=".8"/></svg><svg style="left:23.5px;top:650.6px" width="15" height="14" viewBox="0 0 15 14"><path d="M1.2 4.4 C2.2 1.6 3.6 1.2 5.4 1.4 L14 1.4 L13.6 3.8 L11.6 3.8 L10.8 10 C10.6 11.2 11.2 11.6 12.4 11 L12.4 12.8 C10 14 7.8 13.2 8.2 10.4 L9.2 3.8 L6.4 3.8 C6 7.4 5.4 10.4 3.8 13.2 L1.4 12.6 C3 10 3.8 7 4.2 3.8 C3.2 3.8 2.8 4.2 2.4 5Z" fill="#222"/></svg><svg style="left:23.5px;top:671.6px" width="15" height="14" viewBox="0 0 15 14"><path d="M1.2 4.4 C2.2 1.6 3.6 1.2 5.4 1.4 L14 1.4 L13.6 3.8 L11.6 3.8 L10.8 10 C10.6 11.2 11.2 11.6 12.4 11 L12.4 12.8 C10 14 7.8 13.2 8.2 10.4 L9.2 3.8 L6.4 3.8 C6 7.4 5.4 10.4 3.8 13.2 L1.4 12.6 C3 10 3.8 7 4.2 3.8 C3.2 3.8 2.8 4.2 2.4 5Z" fill="#222"/></svg><svg style="left:24px;top:692px" width="14" height="16" viewBox="0 0 14 16"><path d="M3.6 1.6 H9.6 M3.6 7.8 H9.6 M3.6 14 H9.6" stroke="#2b2b2b" stroke-width="2.4"/><path d="M1.6 3.2 V6.2 M11.6 3.2 V6.2 M1.6 9.4 V12.4 M11.6 9.4 V12.4" stroke="#2b2b2b" stroke-width="2.6"/></svg><svg style="left:23.3px;top:713px" width="16" height="16" viewBox="0 0 16 16"><circle cx="7.6" cy="7.6" r="6" fill="#a3cb85" stroke="#333" stroke-width="1.8"/></svg><svg style="left:23.5px;top:756.5px" width="15" height="13" viewBox="0 0 15 13"><path d="M.6 1 H13.6 V7.4 L9.6 11.4 H.6Z" fill="#343434"/><path d="M2 2 H4 V3.6 H2Z M5.4 2 H7.4 V3.6 H5.4Z M8.8 2 H10.8 V3.6 H8.8Z" fill="#ddd"/><path d="M13.6 7.4 L9.6 11.4 L9.8 8Z" fill="#999"/></svg><svg style="left:23.3px;top:775.8px" width="16" height="16" viewBox="0 0 16 16"><circle cx="7.6" cy="7.6" r="6" fill="#f8d9a4" stroke="#333" stroke-width="1.8"/><path d="M7.4 8.4 L7.4 5 M7.4 8.4 L10.8 5.6" stroke="#222" stroke-width="1.4" fill="none"/></svg><svg style="left:23.3px;top:796.6px" width="16" height="16" viewBox="0 0 16 16"><path d="M4.4 3.6 C.6 6.6 1.6 13.6 7.6 13.8 C13.6 13.6 14.6 6.6 10.8 3.6" fill="none" stroke="#222" stroke-width="1.9" stroke-linecap="round"/><path d="M7.6 1.4 V8" stroke="#222" stroke-width="2" stroke-linecap="round"/></svg><svg style="left:24px;top:818px" width="13" height="3" viewBox="0 0 13 3"><rect x="0" y="0" width="12.6" height="3" fill="#333"/></svg><svg style="left:335.4px;top:690.4px" width="16" height="18" viewBox="0 0 16 18"><path d="M8 .8 C9.6 .8 10.4 2 10.4 3.2 C10.4 4.2 10 4.8 9.4 5.4 C11.4 5.6 12.6 6.6 13.2 8.4 L14.4 12.2 L12.8 12.8 L11.6 9.6 L11.2 12.6 L13.6 16.6 L15 16.8 L15 17.8 L10.6 17.8 L8 13.6 L5.4 17.8 L1 17.8 L1 16.8 L2.4 16.6 L4.8 12.6 L4.4 9.6 L3.2 12.8 L1.6 12.2 L2.8 8.4 C3.4 6.6 4.6 5.6 6.6 5.4 C6 4.8 5.6 4.2 5.6 3.2 C5.6 2 6.4 .8 8 .8Z" fill="#3f9f1c" stroke="#2a6a12" stroke-width=".9" stroke-linejoin="round"/><path d="M8 6 L8 12" stroke="#6cc83c" stroke-width="1.6" opacity=".7"/></svg><svg style="left:432.8px;top:591.0px" width="18.4" height="18.4" viewBox="0 0 20 20"><defs><linearGradient id="gtm2" x1="0" x2="1"><stop offset="0" stop-color="#4aae22"/><stop offset=".36" stop-color="#88cc64"/><stop offset=".6" stop-color="#74a89a"/><stop offset="1" stop-color="#7f9cc4"/></linearGradient></defs><path d="M8.2 2.4 L18 1.8 C18.4 6 17.6 11 15.4 14.4 C13.6 17.2 10.4 18.4 7.4 17.6 C3.8 16.8 1.6 13.8 1.8 10 C2 5.8 4.6 2.8 8.2 2.4Z" fill="url(#gtm2)" stroke="#3b3f3a" stroke-width="1.7" stroke-linejoin="round"/><path d="M5.6 8.4 L13.8 7.4" stroke="#222" stroke-width="1.4"/><circle cx="9.6" cy="10.2" r="2" fill="none" stroke="#222" stroke-width="1.2"/></svg><svg style="left:502.5px;top:591px" width="20" height="20" viewBox="0 0 20 20"><path d="M3.4 2 V14.6 M1.6 17.6 H17.6" stroke="#111" stroke-width="1.3"/><path d="M3.4 .8 L1.8 3.4 H5Z M.6 17.6 L3.2 16 V19.2Z M18.8 17.6 L16.2 16 V19.2Z" fill="#111"/><path d="M2.6 9 C5.4 6.8 6.8 12.6 9.8 12.2 C13.4 11.8 12.6 3.6 16.8 2" fill="none" stroke="#f08a1a" stroke-width="2.6" stroke-linecap="round"/><path d="M2.6 9 C5.4 6.8 6.8 12.6 9.8 12.2 C13.4 11.8 12.6 3.6 16.8 2" fill="none" stroke="#fbd04a" stroke-width="1"/></svg><svg style="left:574.6px;top:591px" width="17" height="19" viewBox="0 0 17 19"><path d="M1 5.6 L6.4 1 L10.6 1 L15.8 5.6 L15.8 16.6 Q15.8 17.8 14.6 17.8 L2.2 17.8 Q1 17.8 1 16.6Z" fill="#4e76b6" stroke="#35578f" stroke-width=".9"/><circle cx="8.4" cy="3.8" r="1" fill="#dfe9f8"/><path d="M6.6 9.2 L3.8 11.6 L6.6 14 M10.2 9.2 L13 11.6 L10.2 14" fill="none" stroke="#fff" stroke-width="1.3"/></svg><svg style="left:644.5px;top:592px" width="18" height="17" viewBox="0 0 18 17"><rect x="1.6" y="4.4" width="13.6" height="11.4" rx="1" fill="#f3f3f3" stroke="#9a9a9a" stroke-width="1"/><path d="M1.6 7 H15.2" stroke="#b9b9b9" stroke-width=".8"/><path d="M15.2 5 L16.8 6.4 V15 L15.2 15.8Z" fill="#c9c9c9"/><circle cx="3.6" cy="3.4" r="1.6" fill="#e0c040" stroke="#666" stroke-width=".5"/><circle cx="7.4" cy="2.8" r="1.6" fill="#7ac070" stroke="#666" stroke-width=".5"/><circle cx="11.4" cy="3" r="1.6" fill="#a0a0a0" stroke="#555" stroke-width=".5"/><path d="M12.4 1.6 L15.6 1 L14.6 3.6" fill="#555"/></svg><svg style="left:2.5px;top:0.5px" width="16" height="20" viewBox="0 0 16 20"><path d="M8 1 C10.8 4.6 14 9.6 14.4 15 L8.2 18.4 L1.6 15 C2 9.6 5.2 4.6 8 1Z" fill="#2f7bd2" stroke="#23467c" stroke-width="1.1" stroke-linejoin="round"/><circle cx="8" cy="12" r="3" fill="#7badea"/><circle cx="8" cy="12.2" r="1.1" fill="#2a3fb0"/><path d="M8 3.4 L8 6" stroke="#8cc0f4" stroke-width="1"/></svg><svg style="left:33.7px;top:58.5px" width="16" height="20" viewBox="0 0 16 20"><path d="M8 1 C10.8 4.6 14 9.6 14.6 15 L8.3 18.2 L1.4 15 C2 9.6 5.2 4.6 8 1Z" fill="#2f7bd2" stroke="#23467c" stroke-width="1.1" stroke-linejoin="round"/><circle cx="8" cy="11.6" r="3" fill="#7badea"/><circle cx="8.2" cy="11.6" r="1.1" fill="#2a3fb0"/><path d="M8 3.4 L8 6" stroke="#8cc0f4" stroke-width="1"/></svg><svg style="left:1023.5px;top:784.5px" width="14" height="22" viewBox="0 0 14 22"><path d="M1.6 1.4 L1.6 17.2 L5.2 13.8 L7.8 19.6 L10.4 18.4 L7.8 12.8 L12 12.4 Z" fill="#0c0c0c" stroke="#f4f4f4" stroke-width="1" stroke-linejoin="round"/></svg>
</div></body></html>
